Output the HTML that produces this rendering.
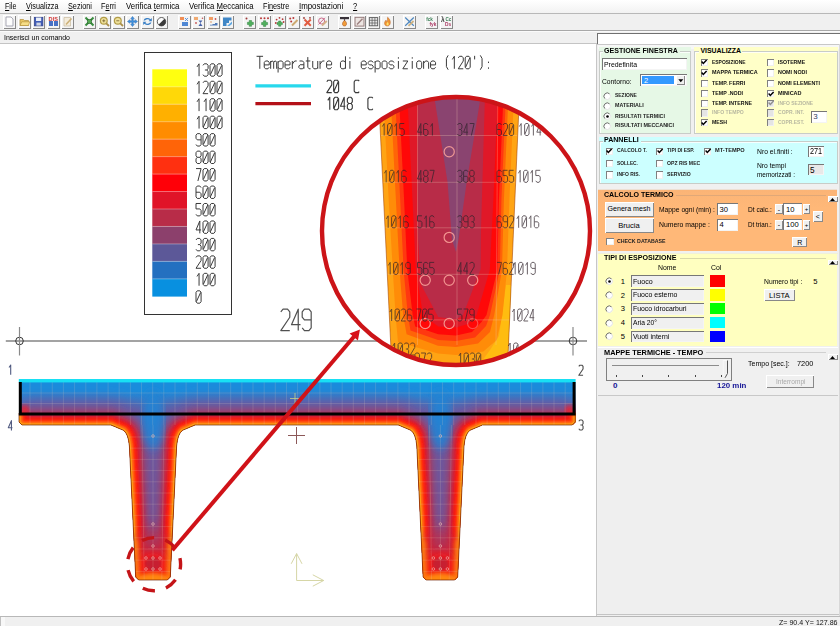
<!DOCTYPE html>
<html><head><meta charset="utf-8"><title>t</title>
<style>
html,body{margin:0;padding:0;}
body{width:840px;height:626px;overflow:hidden;background:#f0f0f0;position:relative;font-family:"Liberation Sans",sans-serif;font-size:8px;color:#000;}
.a{position:absolute;white-space:nowrap;}
.t{position:absolute;white-space:nowrap;line-height:1;}

</style></head><body>
<div class="a" style="left:0.00px;top:0.00px;width:840.00px;height:13.00px;background:linear-gradient(#ffffff,#f2f2f2);"></div>
<div class="a" style="left:0.00px;top:12.50px;width:840.00px;height:1.00px;background:#b8b8b8;"></div>
<div class="a" style="left:0.00px;top:13.50px;width:840.00px;height:17.00px;background:#f0f0f0;"></div>
<div class="a" style="left:0.00px;top:30.00px;width:840.00px;height:1.00px;background:#a8a8a8;"></div>
<div class="a" style="left:0.00px;top:31.00px;width:840.00px;height:1.00px;background:#fafafa;"></div>
<div class="a" style="left:0.00px;top:32.00px;width:840.00px;height:12.00px;background:#f0f0f0;"></div>
<div class="a" style="left:0.00px;top:43.00px;width:597.00px;height:1.00px;background:#c4c4c4;"></div>
<div class="t" style="left:4.70px;top:2.32px;font-size:8.6px;color:#000;transform:scaleX(0.8155);transform-origin:0 0;"><u>F</u>ile</div>
<div class="t" style="left:25.80px;top:2.32px;font-size:8.6px;color:#000;transform:scaleX(0.8428);transform-origin:0 0;"><u>V</u>isualizza</div>
<div class="t" style="left:67.80px;top:2.32px;font-size:8.6px;color:#000;transform:scaleX(0.8474);transform-origin:0 0;"><u>S</u>ezioni</div>
<div class="t" style="left:101.00px;top:2.32px;font-size:8.6px;color:#000;transform:scaleX(0.8488);transform-origin:0 0;">F<u>e</u>rri</div>
<div class="t" style="left:125.50px;top:2.32px;font-size:8.6px;color:#000;transform:scaleX(0.9101);transform-origin:0 0;">Verifica <u>t</u>ermica</div>
<div class="t" style="left:188.70px;top:2.32px;font-size:8.6px;color:#000;transform:scaleX(0.9010);transform-origin:0 0;">Verifica <u>M</u>eccanica</div>
<div class="t" style="left:262.80px;top:2.32px;font-size:8.6px;color:#000;transform:scaleX(0.8434);transform-origin:0 0;">Fi<u>n</u>estre</div>
<div class="t" style="left:298.80px;top:2.32px;font-size:8.6px;color:#000;transform:scaleX(0.9156);transform-origin:0 0;"><u>I</u>mpostazioni</div>
<div class="t" style="left:352.80px;top:2.32px;font-size:8.6px;color:#000;transform:scaleX(0.8782);transform-origin:0 0;"><u>?</u></div>
<div class="t" style="left:3.80px;top:33.83px;font-size:8.00px;color:#000;transform:scaleX(0.8731);transform-origin:0 0;">Inserisci un comando</div>
<div class="a" style="left:597.00px;top:33.00px;width:243.00px;height:11.00px;background:#fff;box-shadow:inset 1px 1px 0 #707070;"></div>
<div class="a" style="left:3.00px;top:15.00px;width:13.00px;height:14.00px;background:#f4f4f4;box-shadow:inset 1px 1px 0 #fff, inset -1px -1px 0 #888;"></div>
<svg class="a" style="left:3.00px;top:15.4px;opacity:0.88" width="13" height="13.4" viewBox="0 0 13 13.4"><path d="M3,2 H8 L10,4 V11 H3 Z" fill="#fff" stroke="#889" stroke-width="0.8"/></svg>
<div class="a" style="left:17.50px;top:15.00px;width:13.00px;height:14.00px;background:#f4f4f4;box-shadow:inset 1px 1px 0 #fff, inset -1px -1px 0 #888;"></div>
<svg class="a" style="left:17.50px;top:15.4px;opacity:0.88" width="13" height="13.4" viewBox="0 0 13 13.4"><path d="M2,4.5 H5.5 L6.5,5.5 H10.5 V10.5 H2 Z" fill="#e8c050" stroke="#a88020" stroke-width="0.7"/><path d="M2,10.5 L3.8,6.8 H11.8 L10.5,10.5 Z" fill="#f8dc78" stroke="#a88020" stroke-width="0.6"/></svg>
<div class="a" style="left:32.00px;top:15.00px;width:13.00px;height:14.00px;background:#f4f4f4;box-shadow:inset 1px 1px 0 #fff, inset -1px -1px 0 #888;"></div>
<svg class="a" style="left:32.00px;top:15.4px;opacity:0.88" width="13" height="13.4" viewBox="0 0 13 13.4"><rect x="2.3" y="2.3" width="8.6" height="8.6" fill="#2848b0" stroke="#182878" stroke-width="0.7"/><rect x="4" y="2.6" width="5.2" height="3.4" fill="#e8eef8"/><rect x="4.4" y="7.6" width="4.4" height="3" fill="#c8d0e0"/></svg>
<div class="a" style="left:46.70px;top:15.00px;width:13.00px;height:14.00px;background:#f4f4f4;box-shadow:inset 1px 1px 0 #fff, inset -1px -1px 0 #888;"></div>
<svg class="a" style="left:46.70px;top:15.4px;opacity:0.88" width="13" height="13.4" viewBox="0 0 13 13.4"><rect x="2" y="6" width="4" height="5" fill="#3060c0"/><rect x="7" y="6" width="4" height="5" fill="#3060c0"/><text x="1.6" y="6.2" font-size="5.6" font-weight="bold" fill="#d02020" font-family="Liberation Sans">DIS</text></svg>
<div class="a" style="left:60.80px;top:15.00px;width:13.00px;height:14.00px;background:#f4f4f4;box-shadow:inset 1px 1px 0 #fff, inset -1px -1px 0 #888;"></div>
<svg class="a" style="left:60.80px;top:15.4px;opacity:0.88" width="13" height="13.4" viewBox="0 0 13 13.4"><path d="M3,2.5 H9.5 V11 H3 Z" fill="#f4ecd8" stroke="#c0b090" stroke-width="0.7"/><path d="M5,9.5 L10.5,3.5" stroke="#c8a868" stroke-width="1.6"/></svg>
<div class="a" style="left:82.80px;top:15.00px;width:13.00px;height:14.00px;background:#f4f4f4;box-shadow:inset 1px 1px 0 #fff, inset -1px -1px 0 #888;"></div>
<svg class="a" style="left:82.80px;top:15.4px;opacity:0.88" width="13" height="13.4" viewBox="0 0 13 13.4"><path d="M2.5,2.5 L10.5,10.5 M10.5,2.5 L2.5,10.5" stroke="#208028" stroke-width="2"/><rect x="4.7" y="4.7" width="3.6" height="3.6" fill="#40a040" stroke="#105010" stroke-width="0.6"/></svg>
<div class="a" style="left:97.50px;top:15.00px;width:13.00px;height:14.00px;background:#f4f4f4;box-shadow:inset 1px 1px 0 #fff, inset -1px -1px 0 #888;"></div>
<svg class="a" style="left:97.50px;top:15.4px;opacity:0.88" width="13" height="13.4" viewBox="0 0 13 13.4"><circle cx="5.8" cy="5.8" r="3.4" fill="#f0e090" stroke="#a89030" stroke-width="1.2"/><path d="M8.3,8.3 L11,11" stroke="#a08030" stroke-width="1.8"/><path d="M4.3,5.8 H7.3 M5.8,4.3 V7.3" stroke="#604810" stroke-width="0.8"/></svg>
<div class="a" style="left:112.00px;top:15.00px;width:13.00px;height:14.00px;background:#f4f4f4;box-shadow:inset 1px 1px 0 #fff, inset -1px -1px 0 #888;"></div>
<svg class="a" style="left:112.00px;top:15.4px;opacity:0.88" width="13" height="13.4" viewBox="0 0 13 13.4"><circle cx="5.8" cy="5.8" r="3.4" fill="#f0e090" stroke="#a89030" stroke-width="1.2"/><path d="M8.3,8.3 L11,11" stroke="#a08030" stroke-width="1.8"/><path d="M4.3,5.8 H7.3" stroke="#604810" stroke-width="0.8"/></svg>
<div class="a" style="left:126.20px;top:15.00px;width:13.00px;height:14.00px;background:#f4f4f4;box-shadow:inset 1px 1px 0 #fff, inset -1px -1px 0 #888;"></div>
<svg class="a" style="left:126.20px;top:15.4px;opacity:0.88" width="13" height="13.4" viewBox="0 0 13 13.4"><path d="M6.5,1.5 L8.3,3.8 H7.2 V5.8 H9.2 V4.7 L11.5,6.5 L9.2,8.3 V7.2 H7.2 V9.2 H8.3 L6.5,11.5 L4.7,9.2 H5.8 V7.2 H3.8 V8.3 L1.5,6.5 L3.8,4.7 V5.8 H5.8 V3.8 H4.7 Z" fill="#2888e0" stroke="#1058a8" stroke-width="0.5"/></svg>
<div class="a" style="left:140.80px;top:15.00px;width:13.00px;height:14.00px;background:#f4f4f4;box-shadow:inset 1px 1px 0 #fff, inset -1px -1px 0 #888;"></div>
<svg class="a" style="left:140.80px;top:15.4px;opacity:0.88" width="13" height="13.4" viewBox="0 0 13 13.4"><path d="M2.5,5.5 A4,3.2 0 0 1 9.5,4.2 L10.8,3 V6.2 H7.6 L8.7,5.1 A2.8,2.2 0 0 0 4,5.6 Z" fill="#2070c0"/><path d="M10.5,7.5 A4,3.2 0 0 1 3.5,8.8 L2.2,10 V6.8 H5.4 L4.3,7.9 A2.8,2.2 0 0 0 9,7.4 Z" fill="#2070c0"/></svg>
<div class="a" style="left:155.30px;top:15.00px;width:13.00px;height:14.00px;background:#f4f4f4;box-shadow:inset 1px 1px 0 #fff, inset -1px -1px 0 #888;"></div>
<svg class="a" style="left:155.30px;top:15.4px;opacity:0.88" width="13" height="13.4" viewBox="0 0 13 13.4"><circle cx="6.5" cy="6.7" r="4.2" fill="#fff" stroke="#222" stroke-width="0.8"/><path d="M9.5,3.7 A4.2,4.2 0 0 1 3.5,9.7 Z" fill="#222"/></svg>
<div class="a" style="left:177.50px;top:15.00px;width:13.00px;height:14.00px;background:#f4f4f4;box-shadow:inset 1px 1px 0 #fff, inset -1px -1px 0 #888;"></div>
<svg class="a" style="left:177.50px;top:15.4px;opacity:0.88" width="13" height="13.4" viewBox="0 0 13 13.4"><rect x="2" y="2" width="4" height="3" fill="#f08040"/><path d="M4,7 H10 V11 H4 Z" fill="#3878d0"/><path d="M7,3 L10,6 M10,3 L7,6" stroke="#3878d0" stroke-width="0.9"/></svg>
<div class="a" style="left:192.00px;top:15.00px;width:13.00px;height:14.00px;background:#f4f4f4;box-shadow:inset 1px 1px 0 #fff, inset -1px -1px 0 #888;"></div>
<svg class="a" style="left:192.00px;top:15.4px;opacity:0.88" width="13" height="13.4" viewBox="0 0 13 13.4"><rect x="2" y="2" width="4" height="3" fill="#f0a060"/><path d="M6.5,5.5 H10.5 L8.5,8 L10.5,11 H6.5 L8.5,8 Z" fill="#3050a0"/><circle cx="4" cy="8" r="0.9" fill="#c04040"/><circle cx="10.5" cy="3.2" r="0.8" fill="#c04040"/></svg>
<div class="a" style="left:206.70px;top:15.00px;width:13.00px;height:14.00px;background:#f4f4f4;box-shadow:inset 1px 1px 0 #fff, inset -1px -1px 0 #888;"></div>
<svg class="a" style="left:206.70px;top:15.4px;opacity:0.88" width="13" height="13.4" viewBox="0 0 13 13.4"><rect x="2" y="2" width="4" height="3" fill="#f09050"/><path d="M3,10.5 H10.5 V8 H8 V9 H5.5 V9.7 H3 Z" fill="#3868b0"/><circle cx="8.5" cy="4" r="0.9" fill="#c04040"/><circle cx="4" cy="7" r="0.8" fill="#d08040"/></svg>
<div class="a" style="left:221.20px;top:15.00px;width:13.00px;height:14.00px;background:#f4f4f4;box-shadow:inset 1px 1px 0 #fff, inset -1px -1px 0 #888;"></div>
<svg class="a" style="left:221.20px;top:15.4px;opacity:0.88" width="13" height="13.4" viewBox="0 0 13 13.4"><path d="M2,2.5 H10.5 V5.5 H8 V8 H5.5 V11 H2 Z" fill="#2878c0"/><path d="M6,11 L11,6.5 V9 L8.5,11 Z" fill="#50a0e0"/></svg>
<div class="a" style="left:243.30px;top:15.00px;width:13.00px;height:14.00px;background:#f4f4f4;box-shadow:inset 1px 1px 0 #fff, inset -1px -1px 0 #888;"></div>
<svg class="a" style="left:243.30px;top:15.4px;opacity:0.88" width="13" height="13.4" viewBox="0 0 13 13.4"><path d="M6.2,5.5 H8.6 V7.3 H10.4 V9.5 H8.6 V11.3 H6.2 V9.5 H4.4 V7.3 H6.2 Z" fill="#38a848" stroke="#187028" stroke-width="0.5"/><circle cx="3.5" cy="3.6" r="1" fill="#902020"/></svg>
<div class="a" style="left:257.80px;top:15.00px;width:13.00px;height:14.00px;background:#f4f4f4;box-shadow:inset 1px 1px 0 #fff, inset -1px -1px 0 #888;"></div>
<svg class="a" style="left:257.80px;top:15.4px;opacity:0.88" width="13" height="13.4" viewBox="0 0 13 13.4"><path d="M5.4,5.8 H7.8 V7.5 H9.6 V9.7 H7.8 V11.4 H5.4 V9.7 H3.6 V7.5 H5.4 Z" fill="#38a848" stroke="#187028" stroke-width="0.5"/><circle cx="3" cy="3.2" r="1" fill="#b02020"/><circle cx="6.5" cy="3.2" r="1" fill="#b02020"/><circle cx="10" cy="3.2" r="1" fill="#b02020"/></svg>
<div class="a" style="left:272.50px;top:15.00px;width:13.00px;height:14.00px;background:#f4f4f4;box-shadow:inset 1px 1px 0 #fff, inset -1px -1px 0 #888;"></div>
<svg class="a" style="left:272.50px;top:15.4px;opacity:0.88" width="13" height="13.4" viewBox="0 0 13 13.4"><path d="M5.6,6 H7.8 V7.6 H9.4 V9.6 H7.8 V11.2 H5.6 V9.6 H4 V7.6 H5.6 Z" fill="#38a848" stroke="#187028" stroke-width="0.5"/><circle cx="2.8" cy="8" r="0.9" fill="#b02020"/><circle cx="3.6" cy="4.6" r="0.9" fill="#b02020"/><circle cx="6.5" cy="2.8" r="0.9" fill="#b02020"/><circle cx="9.6" cy="4.2" r="0.9" fill="#b02020"/><circle cx="10.6" cy="7" r="0.9" fill="#b02020"/></svg>
<div class="a" style="left:286.70px;top:15.00px;width:13.00px;height:14.00px;background:#f4f4f4;box-shadow:inset 1px 1px 0 #fff, inset -1px -1px 0 #888;"></div>
<svg class="a" style="left:286.70px;top:15.4px;opacity:0.88" width="13" height="13.4" viewBox="0 0 13 13.4"><circle cx="3.2" cy="3.4" r="1" fill="#b02020"/><circle cx="6.4" cy="3" r="1" fill="#b02020"/><circle cx="4.2" cy="6.4" r="1" fill="#b02020"/><path d="M5,10.5 L10.5,5" stroke="#c8a060" stroke-width="2"/></svg>
<div class="a" style="left:301.30px;top:15.00px;width:13.00px;height:14.00px;background:#f4f4f4;box-shadow:inset 1px 1px 0 #fff, inset -1px -1px 0 #888;"></div>
<svg class="a" style="left:301.30px;top:15.4px;opacity:0.88" width="13" height="13.4" viewBox="0 0 13 13.4"><path d="M3.5,4.5 L9.8,10.8 M9.8,4.5 L3.5,10.8" stroke="#e04828" stroke-width="2"/><circle cx="3" cy="3" r="0.9" fill="#902020"/><circle cx="9" cy="2.8" r="0.9" fill="#902020"/></svg>
<div class="a" style="left:315.80px;top:15.00px;width:13.00px;height:14.00px;background:#f4f4f4;box-shadow:inset 1px 1px 0 #fff, inset -1px -1px 0 #888;"></div>
<svg class="a" style="left:315.80px;top:15.4px;opacity:0.88" width="13" height="13.4" viewBox="0 0 13 13.4"><circle cx="5.6" cy="6" r="3" fill="none" stroke="#c04870" stroke-width="0.9"/><path d="M2.5,9.5 L9,2.8" stroke="#c04870" stroke-width="0.9"/><path d="M6,10.6 L10.8,6" stroke="#d0a878" stroke-width="1.8"/></svg>
<div class="a" style="left:338.00px;top:15.00px;width:13.00px;height:14.00px;background:#f4f4f4;box-shadow:inset 1px 1px 0 #fff, inset -1px -1px 0 #888;"></div>
<svg class="a" style="left:338.00px;top:15.4px;opacity:0.88" width="13" height="13.4" viewBox="0 0 13 13.4"><rect x="2" y="2" width="9" height="2.2" fill="#201820"/><path d="M6.5,4.2 V6" stroke="#201820" stroke-width="1.2"/><path d="M6.5,5.4 C9.5,7.4 9,11 6.5,11 C4,11 3.6,7.6 6.5,5.4 Z" fill="#f09020" stroke="#a04810" stroke-width="0.6"/></svg>
<div class="a" style="left:352.50px;top:15.00px;width:13.00px;height:14.00px;background:#f4f4f4;box-shadow:inset 1px 1px 0 #fff, inset -1px -1px 0 #888;"></div>
<svg class="a" style="left:352.50px;top:15.4px;opacity:0.88" width="13" height="13.4" viewBox="0 0 13 13.4"><rect x="2" y="2.3" width="9" height="8.8" fill="#ece4e0" stroke="#806060" stroke-width="0.9"/><path d="M4,9.5 L9.5,3.8" stroke="#907070" stroke-width="1.4"/></svg>
<div class="a" style="left:367.00px;top:15.00px;width:13.00px;height:14.00px;background:#f4f4f4;box-shadow:inset 1px 1px 0 #fff, inset -1px -1px 0 #888;"></div>
<svg class="a" style="left:367.00px;top:15.4px;opacity:0.88" width="13" height="13.4" viewBox="0 0 13 13.4"><rect x="2.3" y="2.6" width="8.4" height="8.2" fill="#e8e8e8" stroke="#444" stroke-width="0.9"/><path d="M5.1,2.6 V10.8 M7.9,2.6 V10.8 M2.3,5.3 H10.7 M2.3,8 H10.7" stroke="#444" stroke-width="0.7"/></svg>
<div class="a" style="left:381.30px;top:15.00px;width:13.00px;height:14.00px;background:#f4f4f4;box-shadow:inset 1px 1px 0 #fff, inset -1px -1px 0 #888;"></div>
<svg class="a" style="left:381.30px;top:15.4px;opacity:0.88" width="13" height="13.4" viewBox="0 0 13 13.4"><path d="M6.6,2.2 C10.5,5 10,11 6.5,11 C3,11 2.8,7 5,5.2 C5.2,6.4 5.8,6.8 6.2,6.4 C6.8,5.2 6.2,3.6 6.6,2.2 Z" fill="#f08818" stroke="#b05010" stroke-width="0.5"/><path d="M6.5,10.4 C8,10.4 8.2,8.4 6.6,7 C5.2,8.4 5.2,10.4 6.5,10.4 Z" fill="#ffe060"/></svg>
<div class="a" style="left:403.30px;top:15.00px;width:13.00px;height:14.00px;background:#f4f4f4;box-shadow:inset 1px 1px 0 #fff, inset -1px -1px 0 #888;"></div>
<svg class="a" style="left:403.30px;top:15.4px;opacity:0.88" width="13" height="13.4" viewBox="0 0 13 13.4"><path d="M2.2,2.5 L10.8,10.8 M10.8,2.5 L2.2,10.8" stroke="#3878b8" stroke-width="1.2"/><path d="M5.5,10.8 L10.5,6" stroke="#c8a870" stroke-width="1.8"/></svg>
<div class="a" style="left:425.30px;top:15.00px;width:13.00px;height:14.00px;background:#f4f4f4;box-shadow:inset 1px 1px 0 #fff, inset -1px -1px 0 #888;"></div>
<svg class="a" style="left:425.30px;top:15.4px;opacity:0.88" width="13" height="13.4" viewBox="0 0 13 13.4"><text x="1.2" y="5.8" font-size="4.6" font-weight="bold" fill="#207040" font-family="Liberation Sans">fck</text><text x="4.4" y="10.8" font-size="4.8" font-weight="bold" fill="#a02050" font-family="Liberation Sans">fyk</text></svg>
<div class="a" style="left:440.00px;top:15.00px;width:13.00px;height:14.00px;background:#f4f4f4;box-shadow:inset 1px 1px 0 #fff, inset -1px -1px 0 #888;"></div>
<svg class="a" style="left:440.00px;top:15.4px;opacity:0.88" width="13" height="13.4" viewBox="0 0 13 13.4"><text x="1" y="7.2" font-size="6.4" font-weight="bold" fill="#222" font-family="Liberation Sans">λ</text><text x="5.4" y="5.6" font-size="4.6" font-weight="bold" fill="#207040" font-family="Liberation Sans">Cc</text><text x="5" y="10.8" font-size="4.8" font-weight="bold" fill="#a02050" font-family="Liberation Sans">Ds</text></svg>
<svg class="a" style="left:0;top:44px" width="596" height="572" viewBox="0 44 596 572">
<rect x="0" y="44" width="597" height="573" fill="#fff"/>
<defs>
<clipPath id="secclip"><path d="M19,382 L575.6,382 L575.6,422 L572.6,425 L482.4,425 L469.9,430.3 Q465.0,434 464.0,446 L457.7,577.0 L454.7,580.0 L426.1,580.0 L423.1,577.0 L416.8,446 Q415.8,434 410.9,430.3 L398.4,425 L195.0,425 L182.5,430.3 Q177.6,434 176.6,446 L170.3,577.0 L167.3,580.0 L138.7,580.0 L135.7,577.0 L129.4,446 Q128.4,434 123.5,430.3 L111.0,425 L22,425 L19,422 Z"/></clipPath>
<filter id="b0" x="-5%" y="-20%" width="110%" height="140%"><feGaussianBlur stdDeviation="0.6"/></filter>
<filter id="b1" x="-5%" y="-20%" width="110%" height="140%"><feGaussianBlur stdDeviation="1.2"/></filter>
<filter id="b2" x="-5%" y="-20%" width="110%" height="140%"><feGaussianBlur stdDeviation="2.5"/></filter>
<filter id="b3" x="-5%" y="-20%" width="110%" height="140%"><feGaussianBlur stdDeviation="4"/></filter>
<filter id="b4" x="-5%" y="-20%" width="110%" height="140%"><feGaussianBlur stdDeviation="7"/></filter>
<linearGradient id="slabg" x1="0" y1="0" x2="0" y2="1"><stop offset="0" stop-color="#6a58a0" stop-opacity="0"/><stop offset="1" stop-color="#7a4c90" stop-opacity="0.85"/></linearGradient>
<clipPath id="bigclip"><circle cx="456" cy="231" r="134"/></clipPath>
</defs>
<rect x="144.5" y="52.5" width="87" height="262" fill="#fff" stroke="#333" stroke-width="1"/>
<rect x="152.3" y="69.30" width="34.7" height="17.76" fill="#ffff10"/>
<rect x="152.3" y="86.76" width="34.7" height="17.76" fill="#ffd808"/>
<rect x="152.3" y="86.26" width="34.7" height="1" fill="#fff" opacity="0.35"/>
<rect x="152.3" y="104.22" width="34.7" height="17.76" fill="#ffb000"/>
<rect x="152.3" y="103.72" width="34.7" height="1" fill="#fff" opacity="0.35"/>
<rect x="152.3" y="121.68" width="34.7" height="17.76" fill="#ff8c00"/>
<rect x="152.3" y="121.18" width="34.7" height="1" fill="#fff" opacity="0.35"/>
<rect x="152.3" y="139.15" width="34.7" height="17.76" fill="#ff6408"/>
<rect x="152.3" y="138.65" width="34.7" height="1" fill="#fff" opacity="0.35"/>
<rect x="152.3" y="156.61" width="34.7" height="17.76" fill="#ff3010"/>
<rect x="152.3" y="156.11" width="34.7" height="1" fill="#fff" opacity="0.35"/>
<rect x="152.3" y="174.07" width="34.7" height="17.76" fill="#ff0008"/>
<rect x="152.3" y="173.57" width="34.7" height="1" fill="#fff" opacity="0.35"/>
<rect x="152.3" y="191.53" width="34.7" height="17.76" fill="#e01428"/>
<rect x="152.3" y="191.03" width="34.7" height="1" fill="#fff" opacity="0.35"/>
<rect x="152.3" y="208.99" width="34.7" height="17.76" fill="#b82c48"/>
<rect x="152.3" y="208.49" width="34.7" height="1" fill="#fff" opacity="0.35"/>
<rect x="152.3" y="226.45" width="34.7" height="17.76" fill="#8c406c"/>
<rect x="152.3" y="225.95" width="34.7" height="1" fill="#fff" opacity="0.35"/>
<rect x="152.3" y="243.92" width="34.7" height="17.76" fill="#5c5898"/>
<rect x="152.3" y="243.42" width="34.7" height="1" fill="#fff" opacity="0.35"/>
<rect x="152.3" y="261.38" width="34.7" height="17.76" fill="#2470c0"/>
<rect x="152.3" y="260.88" width="34.7" height="1" fill="#fff" opacity="0.35"/>
<rect x="152.3" y="278.84" width="34.7" height="17.76" fill="#0890e0"/>
<rect x="152.3" y="278.34" width="34.7" height="1" fill="#fff" opacity="0.35"/>
<g fill="none" stroke="#3a3a3a" stroke-width="1.00" stroke-linejoin="round" ><path d="M0.8,2 L2.4,0 L2.4,8" vector-effect="non-scaling-stroke" transform="translate(196.00,63.80) scale(1.271,1.550)" /><path d="M0,1 L1,0 L3,0 L4,1 L4,3 L3,4 L1.5,4 M3,4 L4,5 L4,7 L3,8 L1,8 L0,7" vector-effect="non-scaling-stroke" transform="translate(203.00,63.80) scale(1.271,1.550)" /><path d="M1,0 L3,0 L4,1 L4,7 L3,8 L1,8 L0,7 L0,1 Z M0.3,7 L3.7,1" vector-effect="non-scaling-stroke" transform="translate(210.00,63.80) scale(1.271,1.550)" /><path d="M1,0 L3,0 L4,1 L4,7 L3,8 L1,8 L0,7 L0,1 Z M0.3,7 L3.7,1" vector-effect="non-scaling-stroke" transform="translate(217.00,63.80) scale(1.271,1.550)" /></g>
<g fill="none" stroke="#3a3a3a" stroke-width="1.00" stroke-linejoin="round" ><path d="M0.8,2 L2.4,0 L2.4,8" vector-effect="non-scaling-stroke" transform="translate(196.00,81.26) scale(1.271,1.550)" /><path d="M0,1 L1,0 L3,0 L4,1 L4,3 L0,8 L4,8" vector-effect="non-scaling-stroke" transform="translate(203.00,81.26) scale(1.271,1.550)" /><path d="M1,0 L3,0 L4,1 L4,7 L3,8 L1,8 L0,7 L0,1 Z M0.3,7 L3.7,1" vector-effect="non-scaling-stroke" transform="translate(210.00,81.26) scale(1.271,1.550)" /><path d="M1,0 L3,0 L4,1 L4,7 L3,8 L1,8 L0,7 L0,1 Z M0.3,7 L3.7,1" vector-effect="non-scaling-stroke" transform="translate(217.00,81.26) scale(1.271,1.550)" /></g>
<g fill="none" stroke="#3a3a3a" stroke-width="1.00" stroke-linejoin="round" ><path d="M0.8,2 L2.4,0 L2.4,8" vector-effect="non-scaling-stroke" transform="translate(196.00,98.72) scale(1.271,1.550)" /><path d="M0.8,2 L2.4,0 L2.4,8" vector-effect="non-scaling-stroke" transform="translate(203.00,98.72) scale(1.271,1.550)" /><path d="M1,0 L3,0 L4,1 L4,7 L3,8 L1,8 L0,7 L0,1 Z M0.3,7 L3.7,1" vector-effect="non-scaling-stroke" transform="translate(210.00,98.72) scale(1.271,1.550)" /><path d="M1,0 L3,0 L4,1 L4,7 L3,8 L1,8 L0,7 L0,1 Z M0.3,7 L3.7,1" vector-effect="non-scaling-stroke" transform="translate(217.00,98.72) scale(1.271,1.550)" /></g>
<g fill="none" stroke="#3a3a3a" stroke-width="1.00" stroke-linejoin="round" ><path d="M0.8,2 L2.4,0 L2.4,8" vector-effect="non-scaling-stroke" transform="translate(196.00,116.18) scale(1.271,1.550)" /><path d="M1,0 L3,0 L4,1 L4,7 L3,8 L1,8 L0,7 L0,1 Z M0.3,7 L3.7,1" vector-effect="non-scaling-stroke" transform="translate(203.00,116.18) scale(1.271,1.550)" /><path d="M1,0 L3,0 L4,1 L4,7 L3,8 L1,8 L0,7 L0,1 Z M0.3,7 L3.7,1" vector-effect="non-scaling-stroke" transform="translate(210.00,116.18) scale(1.271,1.550)" /><path d="M1,0 L3,0 L4,1 L4,7 L3,8 L1,8 L0,7 L0,1 Z M0.3,7 L3.7,1" vector-effect="non-scaling-stroke" transform="translate(217.00,116.18) scale(1.271,1.550)" /></g>
<g fill="none" stroke="#3a3a3a" stroke-width="1.00" stroke-linejoin="round" ><path d="M0,7 L1,8 L3,8 L4,7 L4,1 L3,0 L1,0 L0,1 L0,3 L1,4 L4,4" vector-effect="non-scaling-stroke" transform="translate(196.00,133.65) scale(1.271,1.550)" /><path d="M1,0 L3,0 L4,1 L4,7 L3,8 L1,8 L0,7 L0,1 Z M0.3,7 L3.7,1" vector-effect="non-scaling-stroke" transform="translate(203.00,133.65) scale(1.271,1.550)" /><path d="M1,0 L3,0 L4,1 L4,7 L3,8 L1,8 L0,7 L0,1 Z M0.3,7 L3.7,1" vector-effect="non-scaling-stroke" transform="translate(210.00,133.65) scale(1.271,1.550)" /></g>
<g fill="none" stroke="#3a3a3a" stroke-width="1.00" stroke-linejoin="round" ><path d="M1,0 L3,0 L4,1 L4,3 L3,4 L1,4 L0,3 L0,1 Z M1,4 L0,5 L0,7 L1,8 L3,8 L4,7 L4,5 L3,4" vector-effect="non-scaling-stroke" transform="translate(196.00,151.11) scale(1.271,1.550)" /><path d="M1,0 L3,0 L4,1 L4,7 L3,8 L1,8 L0,7 L0,1 Z M0.3,7 L3.7,1" vector-effect="non-scaling-stroke" transform="translate(203.00,151.11) scale(1.271,1.550)" /><path d="M1,0 L3,0 L4,1 L4,7 L3,8 L1,8 L0,7 L0,1 Z M0.3,7 L3.7,1" vector-effect="non-scaling-stroke" transform="translate(210.00,151.11) scale(1.271,1.550)" /></g>
<g fill="none" stroke="#3a3a3a" stroke-width="1.00" stroke-linejoin="round" ><path d="M0,0 L4,0 L1.5,8" vector-effect="non-scaling-stroke" transform="translate(196.00,168.57) scale(1.271,1.550)" /><path d="M1,0 L3,0 L4,1 L4,7 L3,8 L1,8 L0,7 L0,1 Z M0.3,7 L3.7,1" vector-effect="non-scaling-stroke" transform="translate(203.00,168.57) scale(1.271,1.550)" /><path d="M1,0 L3,0 L4,1 L4,7 L3,8 L1,8 L0,7 L0,1 Z M0.3,7 L3.7,1" vector-effect="non-scaling-stroke" transform="translate(210.00,168.57) scale(1.271,1.550)" /></g>
<g fill="none" stroke="#3a3a3a" stroke-width="1.00" stroke-linejoin="round" ><path d="M4,1 L3,0 L1,0 L0,1 L0,7 L1,8 L3,8 L4,7 L4,5 L3,4 L0,4" vector-effect="non-scaling-stroke" transform="translate(196.00,186.03) scale(1.271,1.550)" /><path d="M1,0 L3,0 L4,1 L4,7 L3,8 L1,8 L0,7 L0,1 Z M0.3,7 L3.7,1" vector-effect="non-scaling-stroke" transform="translate(203.00,186.03) scale(1.271,1.550)" /><path d="M1,0 L3,0 L4,1 L4,7 L3,8 L1,8 L0,7 L0,1 Z M0.3,7 L3.7,1" vector-effect="non-scaling-stroke" transform="translate(210.00,186.03) scale(1.271,1.550)" /></g>
<g fill="none" stroke="#3a3a3a" stroke-width="1.00" stroke-linejoin="round" ><path d="M4,0 L0,0 L0,3.5 L3,3.5 L4,4.5 L4,7 L3,8 L1,8 L0,7" vector-effect="non-scaling-stroke" transform="translate(196.00,203.49) scale(1.271,1.550)" /><path d="M1,0 L3,0 L4,1 L4,7 L3,8 L1,8 L0,7 L0,1 Z M0.3,7 L3.7,1" vector-effect="non-scaling-stroke" transform="translate(203.00,203.49) scale(1.271,1.550)" /><path d="M1,0 L3,0 L4,1 L4,7 L3,8 L1,8 L0,7 L0,1 Z M0.3,7 L3.7,1" vector-effect="non-scaling-stroke" transform="translate(210.00,203.49) scale(1.271,1.550)" /></g>
<g fill="none" stroke="#3a3a3a" stroke-width="1.00" stroke-linejoin="round" ><path d="M3,8 L3,0 L0,5.8 L4,5.8" vector-effect="non-scaling-stroke" transform="translate(196.00,220.95) scale(1.271,1.550)" /><path d="M1,0 L3,0 L4,1 L4,7 L3,8 L1,8 L0,7 L0,1 Z M0.3,7 L3.7,1" vector-effect="non-scaling-stroke" transform="translate(203.00,220.95) scale(1.271,1.550)" /><path d="M1,0 L3,0 L4,1 L4,7 L3,8 L1,8 L0,7 L0,1 Z M0.3,7 L3.7,1" vector-effect="non-scaling-stroke" transform="translate(210.00,220.95) scale(1.271,1.550)" /></g>
<g fill="none" stroke="#3a3a3a" stroke-width="1.00" stroke-linejoin="round" ><path d="M0,1 L1,0 L3,0 L4,1 L4,3 L3,4 L1.5,4 M3,4 L4,5 L4,7 L3,8 L1,8 L0,7" vector-effect="non-scaling-stroke" transform="translate(196.00,238.42) scale(1.271,1.550)" /><path d="M1,0 L3,0 L4,1 L4,7 L3,8 L1,8 L0,7 L0,1 Z M0.3,7 L3.7,1" vector-effect="non-scaling-stroke" transform="translate(203.00,238.42) scale(1.271,1.550)" /><path d="M1,0 L3,0 L4,1 L4,7 L3,8 L1,8 L0,7 L0,1 Z M0.3,7 L3.7,1" vector-effect="non-scaling-stroke" transform="translate(210.00,238.42) scale(1.271,1.550)" /></g>
<g fill="none" stroke="#3a3a3a" stroke-width="1.00" stroke-linejoin="round" ><path d="M0,1 L1,0 L3,0 L4,1 L4,3 L0,8 L4,8" vector-effect="non-scaling-stroke" transform="translate(196.00,255.88) scale(1.271,1.550)" /><path d="M1,0 L3,0 L4,1 L4,7 L3,8 L1,8 L0,7 L0,1 Z M0.3,7 L3.7,1" vector-effect="non-scaling-stroke" transform="translate(203.00,255.88) scale(1.271,1.550)" /><path d="M1,0 L3,0 L4,1 L4,7 L3,8 L1,8 L0,7 L0,1 Z M0.3,7 L3.7,1" vector-effect="non-scaling-stroke" transform="translate(210.00,255.88) scale(1.271,1.550)" /></g>
<g fill="none" stroke="#3a3a3a" stroke-width="1.00" stroke-linejoin="round" ><path d="M0.8,2 L2.4,0 L2.4,8" vector-effect="non-scaling-stroke" transform="translate(196.00,273.34) scale(1.271,1.550)" /><path d="M1,0 L3,0 L4,1 L4,7 L3,8 L1,8 L0,7 L0,1 Z M0.3,7 L3.7,1" vector-effect="non-scaling-stroke" transform="translate(203.00,273.34) scale(1.271,1.550)" /><path d="M1,0 L3,0 L4,1 L4,7 L3,8 L1,8 L0,7 L0,1 Z M0.3,7 L3.7,1" vector-effect="non-scaling-stroke" transform="translate(210.00,273.34) scale(1.271,1.550)" /></g>
<g fill="none" stroke="#3a3a3a" stroke-width="1.00" stroke-linejoin="round" ><path d="M1,0 L3,0 L4,1 L4,7 L3,8 L1,8 L0,7 L0,1 Z M0.3,7 L3.7,1" vector-effect="non-scaling-stroke" transform="translate(196.00,290.80) scale(1.271,1.550)" /></g>
<g fill="none" stroke="#3a3a3a" stroke-width="1.00" stroke-linejoin="round" ><path d="M-0.6,0 L4.6,0 M2,0 L2,8" vector-effect="non-scaling-stroke" transform="translate(257.30,56.30) scale(1.250,1.562)" /><path d="M0,5.5 L4,5.5 L4,4 L3,3 L1,3 L0,4 L0,7 L1,8 L3,8 L4,7" vector-effect="non-scaling-stroke" transform="translate(264.23,56.30) scale(1.250,1.562)" /><path d="M-0.4,8 L-0.4,3 M-0.4,4 L0.5,3 L1.2,3 L2,4 L2,8 M2,4 L2.9,3 L3.6,3 L4.4,4 L4.4,8" vector-effect="non-scaling-stroke" transform="translate(271.16,56.30) scale(1.250,1.562)" /><path d="M0,3 L0,10.4 M0,4 L1,3 L3,3 L4,4 L4,7 L3,8 L1,8 L0,7" vector-effect="non-scaling-stroke" transform="translate(278.09,56.30) scale(1.250,1.562)" /><path d="M0,5.5 L4,5.5 L4,4 L3,3 L1,3 L0,4 L0,7 L1,8 L3,8 L4,7" vector-effect="non-scaling-stroke" transform="translate(285.02,56.30) scale(1.250,1.562)" /><path d="M0.3,3 L0.3,8 M0.3,5 L2.2,3 L3.8,3" vector-effect="non-scaling-stroke" transform="translate(291.95,56.30) scale(1.250,1.562)" /><path d="M0.5,3 L3,3 L4,4 L4,8 M4,5.4 L1,5.4 L0,6.2 L0,7.2 L1,8 L3,8 L4,7" vector-effect="non-scaling-stroke" transform="translate(298.88,56.30) scale(1.250,1.562)" /><path d="M1.6,0.5 L1.6,7 L2.6,8 L3.8,8 M0,3 L3.6,3" vector-effect="non-scaling-stroke" transform="translate(305.81,56.30) scale(1.250,1.562)" /><path d="M0,3 L0,7 L1,8 L3,8 L4,7 M4,3 L4,8" vector-effect="non-scaling-stroke" transform="translate(312.74,56.30) scale(1.250,1.562)" /><path d="M0.3,3 L0.3,8 M0.3,5 L2.2,3 L3.8,3" vector-effect="non-scaling-stroke" transform="translate(319.67,56.30) scale(1.250,1.562)" /><path d="M0,5.5 L4,5.5 L4,4 L3,3 L1,3 L0,4 L0,7 L1,8 L3,8 L4,7" vector-effect="non-scaling-stroke" transform="translate(326.60,56.30) scale(1.250,1.562)" /><path d="M4,0 L4,8 M4,4 L3,3 L1,3 L0,4 L0,7 L1,8 L3,8 L4,7" vector-effect="non-scaling-stroke" transform="translate(340.46,56.30) scale(1.250,1.562)" /><path d="M2,3 L2,8 M2,0.6 L2,1.5" vector-effect="non-scaling-stroke" transform="translate(347.39,56.30) scale(1.250,1.562)" /><path d="M0,5.5 L4,5.5 L4,4 L3,3 L1,3 L0,4 L0,7 L1,8 L3,8 L4,7" vector-effect="non-scaling-stroke" transform="translate(361.25,56.30) scale(1.250,1.562)" /><path d="M4,4 L3,3 L1,3 L0,4 L0,4.7 L1,5.5 L3,5.5 L4,6.3 L4,7 L3,8 L1,8 L0,7" vector-effect="non-scaling-stroke" transform="translate(368.18,56.30) scale(1.250,1.562)" /><path d="M0,3 L0,10.4 M0,4 L1,3 L3,3 L4,4 L4,7 L3,8 L1,8 L0,7" vector-effect="non-scaling-stroke" transform="translate(375.11,56.30) scale(1.250,1.562)" /><path d="M1,3 L3,3 L4,4 L4,7 L3,8 L1,8 L0,7 L0,4 Z" vector-effect="non-scaling-stroke" transform="translate(382.04,56.30) scale(1.250,1.562)" /><path d="M4,4 L3,3 L1,3 L0,4 L0,4.7 L1,5.5 L3,5.5 L4,6.3 L4,7 L3,8 L1,8 L0,7" vector-effect="non-scaling-stroke" transform="translate(388.97,56.30) scale(1.250,1.562)" /><path d="M2,3 L2,8 M2,0.6 L2,1.5" vector-effect="non-scaling-stroke" transform="translate(395.90,56.30) scale(1.250,1.562)" /><path d="M0,3 L4,3 L0,8 L4,8" vector-effect="non-scaling-stroke" transform="translate(402.83,56.30) scale(1.250,1.562)" /><path d="M2,3 L2,8 M2,0.6 L2,1.5" vector-effect="non-scaling-stroke" transform="translate(409.76,56.30) scale(1.250,1.562)" /><path d="M1,3 L3,3 L4,4 L4,7 L3,8 L1,8 L0,7 L0,4 Z" vector-effect="non-scaling-stroke" transform="translate(416.69,56.30) scale(1.250,1.562)" /><path d="M0,3 L0,8 M0,4.5 L1.5,3 L3,3 L4,4 L4,8" vector-effect="non-scaling-stroke" transform="translate(423.62,56.30) scale(1.250,1.562)" /><path d="M0,5.5 L4,5.5 L4,4 L3,3 L1,3 L0,4 L0,7 L1,8 L3,8 L4,7" vector-effect="non-scaling-stroke" transform="translate(430.55,56.30) scale(1.250,1.562)" /><path d="M3,-0.6 L1.6,1.4 L1.6,6.6 L3,8.6" vector-effect="non-scaling-stroke" transform="translate(444.41,56.30) scale(1.250,1.562)" /><path d="M0.8,2 L2.4,0 L2.4,8" vector-effect="non-scaling-stroke" transform="translate(451.34,56.30) scale(1.250,1.562)" /><path d="M0,1 L1,0 L3,0 L4,1 L4,3 L0,8 L4,8" vector-effect="non-scaling-stroke" transform="translate(458.27,56.30) scale(1.250,1.562)" /><path d="M1,0 L3,0 L4,1 L4,7 L3,8 L1,8 L0,7 L0,1 Z M0.3,7 L3.7,1" vector-effect="non-scaling-stroke" transform="translate(465.20,56.30) scale(1.250,1.562)" /><path d="M2,-0.3 L2,2" vector-effect="non-scaling-stroke" transform="translate(472.13,56.30) scale(1.250,1.562)" /><path d="M1,-0.6 L2.4,1.4 L2.4,6.6 L1,8.6" vector-effect="non-scaling-stroke" transform="translate(479.06,56.30) scale(1.250,1.562)" /><path d="M2,3.4 L2,4.3 M2,7.1 L2,8" vector-effect="non-scaling-stroke" transform="translate(485.99,56.30) scale(1.250,1.562)" /></g>
<line x1="255.4" y1="85.8" x2="311" y2="85.8" stroke="#28d8ec" stroke-width="3.2"/>
<line x1="255.4" y1="103.7" x2="311" y2="103.7" stroke="#b41018" stroke-width="3.2"/>
<g fill="none" stroke="#383838" stroke-width="1.12" stroke-linejoin="round" ><path d="M0,1 L1,0 L3,0 L4,1 L4,3 L0,8 L4,8" vector-effect="non-scaling-stroke" transform="translate(326.80,80.20) scale(1.240,1.550)" /><path d="M1,0 L3,0 L4,1 L4,7 L3,8 L1,8 L0,7 L0,1 Z M0.3,7 L3.7,1" vector-effect="non-scaling-stroke" transform="translate(333.65,80.20) scale(1.240,1.550)" /><path d="M4,0.6 L3.4,0 L1,0 L0,1 L0,7 L1,8 L3.4,8 L4,7.4" vector-effect="non-scaling-stroke" transform="translate(354.20,80.20) scale(1.240,1.550)" /></g>
<g fill="none" stroke="#383838" stroke-width="1.12" stroke-linejoin="round" ><path d="M0.8,2 L2.4,0 L2.4,8" vector-effect="non-scaling-stroke" transform="translate(326.80,97.30) scale(1.240,1.550)" /><path d="M1,0 L3,0 L4,1 L4,7 L3,8 L1,8 L0,7 L0,1 Z M0.3,7 L3.7,1" vector-effect="non-scaling-stroke" transform="translate(333.65,97.30) scale(1.240,1.550)" /><path d="M3,8 L3,0 L0,5.8 L4,5.8" vector-effect="non-scaling-stroke" transform="translate(340.50,97.30) scale(1.240,1.550)" /><path d="M1,0 L3,0 L4,1 L4,3 L3,4 L1,4 L0,3 L0,1 Z M1,4 L0,5 L0,7 L1,8 L3,8 L4,7 L4,5 L3,4" vector-effect="non-scaling-stroke" transform="translate(347.35,97.30) scale(1.240,1.550)" /><path d="M4,0.6 L3.4,0 L1,0 L0,1 L0,7 L1,8 L3.4,8 L4,7.4" vector-effect="non-scaling-stroke" transform="translate(367.90,97.30) scale(1.240,1.550)" /></g>
<line x1="5.8" y1="341" x2="587" y2="341" stroke="#484848" stroke-width="1.1"/>
<circle cx="19.5" cy="341" r="3.8" fill="none" stroke="#333" stroke-width="1"/>
<line x1="19.5" y1="327" x2="19.5" y2="355.5" stroke="#8a8a8a" stroke-width="1.2"/>
<circle cx="573.0" cy="341" r="3.8" fill="none" stroke="#333" stroke-width="1"/>
<line x1="573.0" y1="327" x2="573.0" y2="355.5" stroke="#8a8a8a" stroke-width="1.2"/>
<g fill="none" stroke="#505050" stroke-width="1.20" stroke-linejoin="round" ><path d="M0,1 L1,0 L3,0 L4,1 L4,3 L0,8 L4,8" vector-effect="non-scaling-stroke" transform="translate(280.80,309.20) scale(2.247,2.675)" /><path d="M3,8 L3,0 L0,5.8 L4,5.8" vector-effect="non-scaling-stroke" transform="translate(291.50,309.20) scale(2.247,2.675)" /><path d="M0,7 L1,8 L3,8 L4,7 L4,1 L3,0 L1,0 L0,1 L0,3 L1,4 L4,4" vector-effect="non-scaling-stroke" transform="translate(302.20,309.20) scale(2.247,2.675)" /></g>
<g fill="none" stroke="#505a80" stroke-width="1.10" stroke-linejoin="round" ><path d="M0.8,2 L2.4,0 L2.4,8" vector-effect="non-scaling-stroke" transform="translate(8.20,365.00) scale(1.041,1.225)" /></g>
<g fill="none" stroke="#505a80" stroke-width="1.10" stroke-linejoin="round" ><path d="M3,8 L3,0 L0,5.8 L4,5.8" vector-effect="non-scaling-stroke" transform="translate(8.30,420.60) scale(1.041,1.225)" /></g>
<g fill="none" stroke="#4a4a4a" stroke-width="1.10" stroke-linejoin="round" ><path d="M0,1 L1,0 L3,0 L4,1 L4,3 L0,8 L4,8" vector-effect="non-scaling-stroke" transform="translate(578.80,365.20) scale(1.062,1.250)" /></g>
<g fill="none" stroke="#4a4a4a" stroke-width="1.10" stroke-linejoin="round" ><path d="M0,1 L1,0 L3,0 L4,1 L4,3 L3,4 L1.5,4 M3,4 L4,5 L4,7 L3,8 L1,8 L0,7" vector-effect="non-scaling-stroke" transform="translate(578.80,420.00) scale(1.062,1.250)" /></g>
<g clip-path="url(#secclip)">
<path d="M19,382 L575.6,382 L575.6,422 L572.6,425 L482.4,425 L469.9,430.3 Q465.0,434 464.0,446 L457.7,577.0 L454.7,580.0 L426.1,580.0 L423.1,577.0 L416.8,446 Q415.8,434 410.9,430.3 L398.4,425 L195.0,425 L182.5,430.3 Q177.6,434 176.6,446 L170.3,577.0 L167.3,580.0 L138.7,580.0 L135.7,577.0 L129.4,446 Q128.4,434 123.5,430.3 L111.0,425 L22,425 L19,422 Z" fill="#1a8cdc"/>
<rect x="19" y="391" width="558" height="24" fill="url(#slabg)"/>
<path d="M575.2,413 L575.2,422 L572.2,425 L482.4,425 L469.9,430.3 Q465.0,434 464.0,446 L457.7,577.0 L454.7,580.0 L426.1,580.0 L423.1,577.0 L416.8,446 Q415.8,434 410.9,430.3 L398.4,425 L195.0,425 L182.5,430.3 Q177.6,434 176.6,446 L170.3,577.0 L167.3,580.0 L138.7,580.0 L135.7,577.0 L129.4,446 Q128.4,434 123.5,430.3 L111.0,425 L22,425 L19,422 L19,413" fill="none" stroke="#6a58a0" stroke-width="50" filter="url(#b4)" stroke-linejoin="round"/>
<path d="M575.2,413 L575.2,422 L572.2,425 L482.4,425 L469.9,430.3 Q465.0,434 464.0,446 L457.7,577.0 L454.7,580.0 L426.1,580.0 L423.1,577.0 L416.8,446 Q415.8,434 410.9,430.3 L398.4,425 L195.0,425 L182.5,430.3 Q177.6,434 176.6,446 L170.3,577.0 L167.3,580.0 L138.7,580.0 L135.7,577.0 L129.4,446 Q128.4,434 123.5,430.3 L111.0,425 L22,425 L19,422 L19,413" fill="none" stroke="#a83a60" stroke-width="30" filter="url(#b3)" stroke-linejoin="round"/>
<path d="M575.2,413 L575.2,422 L572.2,425 L482.4,425 L469.9,430.3 Q465.0,434 464.0,446 L457.7,577.0 L454.7,580.0 L426.1,580.0 L423.1,577.0 L416.8,446 Q415.8,434 410.9,430.3 L398.4,425 L195.0,425 L182.5,430.3 Q177.6,434 176.6,446 L170.3,577.0 L167.3,580.0 L138.7,580.0 L135.7,577.0 L129.4,446 Q128.4,434 123.5,430.3 L111.0,425 L22,425 L19,422 L19,413" fill="none" stroke="#e81820" stroke-width="20" filter="url(#b2)" stroke-linejoin="round"/>
<path d="M575.2,413 L575.2,422 L572.2,425 L482.4,425 L469.9,430.3 Q465.0,434 464.0,446 L457.7,577.0 L454.7,580.0 L426.1,580.0 L423.1,577.0 L416.8,446 Q415.8,434 410.9,430.3 L398.4,425 L195.0,425 L182.5,430.3 Q177.6,434 176.6,446 L170.3,577.0 L167.3,580.0 L138.7,580.0 L135.7,577.0 L129.4,446 Q128.4,434 123.5,430.3 L111.0,425 L22,425 L19,422 L19,413" fill="none" stroke="#ff2008" stroke-width="13" filter="url(#b1)" stroke-linejoin="round"/>
<path d="M575.2,413 L575.2,422 L572.2,425 L482.4,425 L469.9,430.3 Q465.0,434 464.0,446 L457.7,577.0 L454.7,580.0 L426.1,580.0 L423.1,577.0 L416.8,446 Q415.8,434 410.9,430.3 L398.4,425 L195.0,425 L182.5,430.3 Q177.6,434 176.6,446 L170.3,577.0 L167.3,580.0 L138.7,580.0 L135.7,577.0 L129.4,446 Q128.4,434 123.5,430.3 L111.0,425 L22,425 L19,422 L19,413" fill="none" stroke="#ff7810" stroke-width="7" filter="url(#b1)" stroke-linejoin="round"/>
<path d="M575.2,413 L575.2,422 L572.2,425 L482.4,425 L469.9,430.3 Q465.0,434 464.0,446 L457.7,577.0 L454.7,580.0 L426.1,580.0 L423.1,577.0 L416.8,446 Q415.8,434 410.9,430.3 L398.4,425 L195.0,425 L182.5,430.3 Q177.6,434 176.6,446 L170.3,577.0 L167.3,580.0 L138.7,580.0 L135.7,577.0 L129.4,446 Q128.4,434 123.5,430.3 L111.0,425 L22,425 L19,422 L19,413" fill="none" stroke="#ffa018" stroke-width="3" filter="url(#b0)" stroke-linejoin="round"/>
<ellipse cx="153.0" cy="420" rx="11" ry="30" fill="#2484d4" opacity="0.9" filter="url(#b3)"/>
<ellipse cx="440.4" cy="420" rx="11" ry="30" fill="#2484d4" opacity="0.9" filter="url(#b3)"/>
<ellipse cx="24.5" cy="410" rx="5" ry="5" fill="#e82030" opacity="0.9" filter="url(#b2)"/>
<ellipse cx="569.8" cy="410" rx="5" ry="5" fill="#e82030" opacity="0.9" filter="url(#b2)"/>
<ellipse cx="153.0" cy="585" rx="26" ry="58" fill="#c82840" opacity="0.7" filter="url(#b4)"/>
<ellipse cx="153.0" cy="592" rx="24" ry="42" fill="#f81414" opacity="0.85" filter="url(#b3)"/>
<path d="M133.4,540 L135.7,581 H170.3 L172.6,540" fill="none" stroke="#ff7810" stroke-width="9" filter="url(#b2)"/>
<ellipse cx="153.0" cy="586" rx="19" ry="13" fill="#ff8810" opacity="1" filter="url(#b2)"/>
<ellipse cx="153.0" cy="564" rx="8" ry="6.5" fill="#c02034" opacity="0.85" filter="url(#b1)"/>
<ellipse cx="440.4" cy="585" rx="26" ry="58" fill="#c82840" opacity="0.7" filter="url(#b4)"/>
<ellipse cx="440.4" cy="592" rx="24" ry="42" fill="#f81414" opacity="0.85" filter="url(#b3)"/>
<path d="M420.8,540 L423.1,581 H457.7 L460.0,540" fill="none" stroke="#ff7810" stroke-width="9" filter="url(#b2)"/>
<ellipse cx="440.4" cy="586" rx="19" ry="13" fill="#ff8810" opacity="1" filter="url(#b2)"/>
<ellipse cx="440.4" cy="564" rx="8" ry="6.5" fill="#c02034" opacity="0.85" filter="url(#b1)"/>
<path d="M30.0,382 V425 M41.1,382 V425 M52.3,382 V425 M63.4,382 V425 M74.6,382 V425 M85.8,382 V425 M96.9,382 V425 M108.1,382 V425 M119.2,382 V425 M130.4,382 V425 M141.5,382 V425 M152.7,382 V425 M163.8,382 V425 M175.0,382 V425 M186.1,382 V425 M197.3,382 V425 M208.4,382 V425 M219.6,382 V425 M230.7,382 V425 M241.9,382 V425 M253.0,382 V425 M264.2,382 V425 M275.3,382 V425 M286.5,382 V425 M297.6,382 V425 M308.8,382 V425 M319.9,382 V425 M331.0,382 V425 M342.2,382 V425 M353.3,382 V425 M364.5,382 V425 M375.6,382 V425 M386.8,382 V425 M397.9,382 V425 M409.1,382 V425 M420.2,382 V425 M431.4,382 V425 M442.5,382 V425 M453.7,382 V425 M464.8,382 V425 M476.0,382 V425 M487.1,382 V425 M498.3,382 V425 M509.4,382 V425 M520.6,382 V425 M531.7,382 V425 M542.9,382 V425 M554.0,382 V425 M565.2,382 V425 M19,393.0 H576.5 M19,403.5 H576.5 M142.0,425 L144.2,580 M153.0,425 L153.0,580 M164.0,425 L161.8,580 M123.0,437.0 H183.0 M123.0,448.2 H183.0 M123.0,459.4 H183.0 M123.0,470.6 H183.0 M123.0,481.8 H183.0 M123.0,493.0 H183.0 M123.0,504.2 H183.0 M123.0,515.4 H183.0 M123.0,526.6 H183.0 M123.0,537.8 H183.0 M123.0,549.0 H183.0 M123.0,560.2 H183.0 M123.0,571.4 H183.0 M429.4,425 L431.6,580 M440.4,425 L440.4,580 M451.4,425 L449.2,580 M410.4,437.0 H470.4 M410.4,448.2 H470.4 M410.4,459.4 H470.4 M410.4,470.6 H470.4 M410.4,481.8 H470.4 M410.4,493.0 H470.4 M410.4,504.2 H470.4 M410.4,515.4 H470.4 M410.4,526.6 H470.4 M410.4,537.8 H470.4 M410.4,549.0 H470.4 M410.4,560.2 H470.4 M410.4,571.4 H470.4" stroke="#e8d0b8" stroke-width="0.8" opacity="0.22" fill="none"/>
</g>
<path d="M575.2,413 L575.2,422 L572.2,425 L482.4,425 L469.9,430.3 Q465.0,434 464.0,446 L457.7,577.0 L454.7,580.0 L426.1,580.0 L423.1,577.0 L416.8,446 Q415.8,434 410.9,430.3 L398.4,425 L195.0,425 L182.5,430.3 Q177.6,434 176.6,446 L170.3,577.0 L167.3,580.0 L138.7,580.0 L135.7,577.0 L129.4,446 Q128.4,434 123.5,430.3 L111.0,425 L22,425 L19,422 L19,413" fill="none" stroke="#702000" stroke-width="0.9" opacity="0.75"/>
<rect x="18.8" y="379" width="556.8" height="3.4" fill="#18e0f4"/>
<path d="M20.3,382 V414 H574.1 V382" fill="none" stroke="#000" stroke-width="3"/>
<circle cx="153.0" cy="436.0" r="1.3" fill="none" stroke="#e8b8b0" stroke-width="0.7" opacity="0.9"/>
<circle cx="153.0" cy="524.0" r="1.3" fill="none" stroke="#e8b8b0" stroke-width="0.7" opacity="0.9"/>
<circle cx="153.0" cy="546.0" r="1.3" fill="none" stroke="#e8b8b0" stroke-width="0.7" opacity="0.9"/>
<circle cx="146.0" cy="558.0" r="1.3" fill="none" stroke="#e8b8b0" stroke-width="0.7" opacity="0.9"/>
<circle cx="153.0" cy="558.0" r="1.3" fill="none" stroke="#e8b8b0" stroke-width="0.7" opacity="0.9"/>
<circle cx="160.0" cy="558.0" r="1.3" fill="none" stroke="#e8b8b0" stroke-width="0.7" opacity="0.9"/>
<circle cx="146.0" cy="569.0" r="1.3" fill="none" stroke="#e8b8b0" stroke-width="0.7" opacity="0.9"/>
<circle cx="153.0" cy="569.0" r="1.3" fill="none" stroke="#e8b8b0" stroke-width="0.7" opacity="0.9"/>
<circle cx="160.0" cy="569.0" r="1.3" fill="none" stroke="#e8b8b0" stroke-width="0.7" opacity="0.9"/>
<circle cx="440.4" cy="436.0" r="1.3" fill="none" stroke="#e8b8b0" stroke-width="0.7" opacity="0.9"/>
<circle cx="440.4" cy="524.0" r="1.3" fill="none" stroke="#e8b8b0" stroke-width="0.7" opacity="0.9"/>
<circle cx="440.4" cy="546.0" r="1.3" fill="none" stroke="#e8b8b0" stroke-width="0.7" opacity="0.9"/>
<circle cx="433.4" cy="558.0" r="1.3" fill="none" stroke="#e8b8b0" stroke-width="0.7" opacity="0.9"/>
<circle cx="440.4" cy="558.0" r="1.3" fill="none" stroke="#e8b8b0" stroke-width="0.7" opacity="0.9"/>
<circle cx="447.4" cy="558.0" r="1.3" fill="none" stroke="#e8b8b0" stroke-width="0.7" opacity="0.9"/>
<circle cx="433.4" cy="569.0" r="1.3" fill="none" stroke="#e8b8b0" stroke-width="0.7" opacity="0.9"/>
<circle cx="440.4" cy="569.0" r="1.3" fill="none" stroke="#e8b8b0" stroke-width="0.7" opacity="0.9"/>
<circle cx="447.4" cy="569.0" r="1.3" fill="none" stroke="#e8b8b0" stroke-width="0.7" opacity="0.9"/>
<path d="M288,435.5 H305 M296.5,427 V444" stroke="#8c5858" stroke-width="1" fill="none"/>
<path d="M290,398.5 H300 M295,393 V404" stroke="#c8d088" stroke-width="1" fill="none" opacity="0.8"/>
<path d="M296.6,580.5 V553.6 M291.2,563.8 L296.6,553.6 L302,563.8 M296.6,580.5 H323.7 M312.8,574.8 L323.7,580.5 L312.8,586.2" stroke="#d6d6a6" stroke-width="1" fill="none"/>
<circle cx="154" cy="564.2" r="26.6" fill="none" stroke="#c41418" stroke-width="3.4" stroke-dasharray="12.5 11.376" stroke-dashoffset="7.2"/>
<line x1="172.3" y1="550.3" x2="354.5" y2="336" stroke="#d01218" stroke-width="4"/>
<path d="M360,329.4 L349.6,333.6 L357.9,340.4 Z" fill="#d81018"/>
<g clip-path="url(#bigclip)">
<rect x="320" y="95" width="275" height="275" fill="#fff"/>
<polygon points="378.5,95.0 519.5,95.0 507.3,372.0 392.1,372.0" fill="#ffa414" />
<polygon points="506.0,285.0 511.1,285.0 507.3,372.0 474.0,372.0 490.0,350.0 499.0,336.0" fill="#ffbc10" />
<polygon points="383.3,95.0 388.7,200.0 392.8,270.0 395.5,315.0 398.0,342.0 438.0,353.4 456.0,355.0 483.3,351.5 496.7,340.0 502.5,315.0 507.0,270.0 509.4,200.0 514.0,95.0" fill="#ff8c08" />
<polygon points="390.5,95.0 395.9,200.0 399.6,270.0 403.1,315.0 406.6,334.3 438.0,345.8 456.0,347.0 478.0,343.5 490.0,332.0 494.2,315.0 502.0,270.0 503.9,200.0 508.5,95.0" fill="#ff6408" />
<polygon points="395.0,95.0 400.2,200.0 403.6,270.0 407.8,315.0 410.5,330.5 438.0,340.0 456.0,341.0 475.0,337.5 486.0,326.0 490.0,315.0 499.8,270.0 501.4,200.0 506.0,95.0" fill="#ff3810" />
<polygon points="398.9,95.0 404.1,200.0 407.3,270.0 412.7,315.0 415.2,326.6 438.2,334.3 456.0,335.5 472.0,332.0 481.5,322.0 486.5,315.0 497.3,270.0 498.9,200.0 503.5,95.0" fill="#ff0808" />
<polygon points="407.3,95.0 412.5,200.0 415.8,270.0 423.0,315.0 438.2,326.6 456.0,327.5 468.0,324.0 476.6,315.0 489.8,270.0 493.4,200.0 498.0,95.0" fill="#e01828" />
<polygon points="417.5,95.0 485.0,95.0 481.0,230.0 480.7,269.0 463.0,315.0 456.0,319.5 438.2,317.0 421.0,284.5 417.5,230.0" fill="#b82c48" />
<polygon points="434.0,95.0 481.0,95.0 466.7,182.0 458.5,240.0 456.0,252.0 452.0,240.0 447.5,182.0" fill="#8a4470" />
<path d="M380.5,135.5 H517.7 M382.8,182.3 H515.7 M385.0,227.8 H513.7 M387.3,274.3 H511.6 M389.5,319.9 H509.6 M417.5,95 L417.5,345 M457.0,95 L457.0,345 M497.8,95 L496.0,345" stroke="#f0c8b0" stroke-width="0.9" opacity="0.33" fill="none"/>
<path d="M378.5,95 L392.1,372 M519.5,95 L507.3,372" stroke="#a04000" stroke-width="0.8" opacity="0.7" fill="none"/>
<circle cx="449.2" cy="151.8" r="5.1" fill="none" stroke="#f8a098" stroke-width="1.2" opacity="0.90"/>
<circle cx="449.2" cy="237.4" r="5.1" fill="none" stroke="#f8a098" stroke-width="1.2" opacity="0.90"/>
<circle cx="425.2" cy="280.3" r="5.1" fill="none" stroke="#f8a098" stroke-width="1.2" opacity="0.90"/>
<circle cx="449.2" cy="280.3" r="5.1" fill="none" stroke="#f8a098" stroke-width="1.2" opacity="0.90"/>
<circle cx="472.7" cy="280.3" r="5.1" fill="none" stroke="#f8a098" stroke-width="1.2" opacity="0.90"/>
<circle cx="425.2" cy="323.5" r="5.1" fill="none" stroke="#f8a098" stroke-width="1.2" opacity="0.90"/>
<circle cx="449.2" cy="323.5" r="5.1" fill="none" stroke="#f8a098" stroke-width="1.2" opacity="0.90"/>
<circle cx="472.7" cy="323.5" r="5.1" fill="none" stroke="#f8a098" stroke-width="1.2" opacity="0.45"/>
<g fill="none" stroke="#30242c" stroke-width="1.00" stroke-linejoin="round" opacity="0.72"><path d="M0.8,2 L2.4,0 L2.4,8" vector-effect="non-scaling-stroke" transform="translate(381.50,123.50) scale(1.110,1.500)" /><path d="M1,0 L3,0 L4,1 L4,7 L3,8 L1,8 L0,7 L0,1 Z M0.3,7 L3.7,1" vector-effect="non-scaling-stroke" transform="translate(387.60,123.50) scale(1.110,1.500)" /><path d="M0.8,2 L2.4,0 L2.4,8" vector-effect="non-scaling-stroke" transform="translate(393.70,123.50) scale(1.110,1.500)" /><path d="M4,0 L0,0 L0,3.5 L3,3.5 L4,4.5 L4,7 L3,8 L1,8 L0,7" vector-effect="non-scaling-stroke" transform="translate(399.80,123.50) scale(1.110,1.500)" /></g>
<g fill="none" stroke="#30242c" stroke-width="1.00" stroke-linejoin="round" opacity="0.72"><path d="M3,8 L3,0 L0,5.8 L4,5.8" vector-effect="non-scaling-stroke" transform="translate(417.50,123.50) scale(1.110,1.500)" /><path d="M4,1 L3,0 L1,0 L0,1 L0,7 L1,8 L3,8 L4,7 L4,5 L3,4 L0,4" vector-effect="non-scaling-stroke" transform="translate(423.60,123.50) scale(1.110,1.500)" /><path d="M0.8,2 L2.4,0 L2.4,8" vector-effect="non-scaling-stroke" transform="translate(429.70,123.50) scale(1.110,1.500)" /></g>
<g fill="none" stroke="#30242c" stroke-width="1.00" stroke-linejoin="round" opacity="0.72"><path d="M0,1 L1,0 L3,0 L4,1 L4,3 L3,4 L1.5,4 M3,4 L4,5 L4,7 L3,8 L1,8 L0,7" vector-effect="non-scaling-stroke" transform="translate(457.50,123.50) scale(1.110,1.500)" /><path d="M3,8 L3,0 L0,5.8 L4,5.8" vector-effect="non-scaling-stroke" transform="translate(463.60,123.50) scale(1.110,1.500)" /><path d="M0,0 L4,0 L1.5,8" vector-effect="non-scaling-stroke" transform="translate(469.70,123.50) scale(1.110,1.500)" /></g>
<g fill="none" stroke="#30242c" stroke-width="1.00" stroke-linejoin="round" opacity="0.72"><path d="M4,1 L3,0 L1,0 L0,1 L0,7 L1,8 L3,8 L4,7 L4,5 L3,4 L0,4" vector-effect="non-scaling-stroke" transform="translate(497.00,123.50) scale(1.110,1.500)" /><path d="M0,1 L1,0 L3,0 L4,1 L4,3 L0,8 L4,8" vector-effect="non-scaling-stroke" transform="translate(503.10,123.50) scale(1.110,1.500)" /><path d="M1,0 L3,0 L4,1 L4,7 L3,8 L1,8 L0,7 L0,1 Z M0.3,7 L3.7,1" vector-effect="non-scaling-stroke" transform="translate(509.20,123.50) scale(1.110,1.500)" /></g>
<g fill="none" stroke="#30242c" stroke-width="1.00" stroke-linejoin="round" opacity="0.72"><path d="M0.8,2 L2.4,0 L2.4,8" vector-effect="non-scaling-stroke" transform="translate(518.50,123.50) scale(1.110,1.500)" /><path d="M1,0 L3,0 L4,1 L4,7 L3,8 L1,8 L0,7 L0,1 Z M0.3,7 L3.7,1" vector-effect="non-scaling-stroke" transform="translate(524.60,123.50) scale(1.110,1.500)" /><path d="M0.8,2 L2.4,0 L2.4,8" vector-effect="non-scaling-stroke" transform="translate(530.70,123.50) scale(1.110,1.500)" /><path d="M3,8 L3,0 L0,5.8 L4,5.8" vector-effect="non-scaling-stroke" transform="translate(536.80,123.50) scale(1.110,1.500)" /></g>
<g fill="none" stroke="#30242c" stroke-width="1.00" stroke-linejoin="round" opacity="0.72"><path d="M0.8,2 L2.4,0 L2.4,8" vector-effect="non-scaling-stroke" transform="translate(383.50,170.30) scale(1.110,1.500)" /><path d="M1,0 L3,0 L4,1 L4,7 L3,8 L1,8 L0,7 L0,1 Z M0.3,7 L3.7,1" vector-effect="non-scaling-stroke" transform="translate(389.60,170.30) scale(1.110,1.500)" /><path d="M0.8,2 L2.4,0 L2.4,8" vector-effect="non-scaling-stroke" transform="translate(395.70,170.30) scale(1.110,1.500)" /><path d="M4,1 L3,0 L1,0 L0,1 L0,7 L1,8 L3,8 L4,7 L4,5 L3,4 L0,4" vector-effect="non-scaling-stroke" transform="translate(401.80,170.30) scale(1.110,1.500)" /></g>
<g fill="none" stroke="#30242c" stroke-width="1.00" stroke-linejoin="round" opacity="0.72"><path d="M3,8 L3,0 L0,5.8 L4,5.8" vector-effect="non-scaling-stroke" transform="translate(417.50,170.30) scale(1.110,1.500)" /><path d="M1,0 L3,0 L4,1 L4,3 L3,4 L1,4 L0,3 L0,1 Z M1,4 L0,5 L0,7 L1,8 L3,8 L4,7 L4,5 L3,4" vector-effect="non-scaling-stroke" transform="translate(423.60,170.30) scale(1.110,1.500)" /><path d="M0,0 L4,0 L1.5,8" vector-effect="non-scaling-stroke" transform="translate(429.70,170.30) scale(1.110,1.500)" /></g>
<g fill="none" stroke="#30242c" stroke-width="1.00" stroke-linejoin="round" opacity="0.72"><path d="M0,1 L1,0 L3,0 L4,1 L4,3 L3,4 L1.5,4 M3,4 L4,5 L4,7 L3,8 L1,8 L0,7" vector-effect="non-scaling-stroke" transform="translate(457.50,170.30) scale(1.110,1.500)" /><path d="M4,1 L3,0 L1,0 L0,1 L0,7 L1,8 L3,8 L4,7 L4,5 L3,4 L0,4" vector-effect="non-scaling-stroke" transform="translate(463.60,170.30) scale(1.110,1.500)" /><path d="M1,0 L3,0 L4,1 L4,3 L3,4 L1,4 L0,3 L0,1 Z M1,4 L0,5 L0,7 L1,8 L3,8 L4,7 L4,5 L3,4" vector-effect="non-scaling-stroke" transform="translate(469.70,170.30) scale(1.110,1.500)" /></g>
<g fill="none" stroke="#30242c" stroke-width="1.00" stroke-linejoin="round" opacity="0.72"><path d="M4,1 L3,0 L1,0 L0,1 L0,7 L1,8 L3,8 L4,7 L4,5 L3,4 L0,4" vector-effect="non-scaling-stroke" transform="translate(497.00,170.30) scale(1.110,1.500)" /><path d="M4,0 L0,0 L0,3.5 L3,3.5 L4,4.5 L4,7 L3,8 L1,8 L0,7" vector-effect="non-scaling-stroke" transform="translate(503.10,170.30) scale(1.110,1.500)" /><path d="M4,0 L0,0 L0,3.5 L3,3.5 L4,4.5 L4,7 L3,8 L1,8 L0,7" vector-effect="non-scaling-stroke" transform="translate(509.20,170.30) scale(1.110,1.500)" /></g>
<g fill="none" stroke="#30242c" stroke-width="1.00" stroke-linejoin="round" opacity="0.72"><path d="M0.8,2 L2.4,0 L2.4,8" vector-effect="non-scaling-stroke" transform="translate(517.50,170.30) scale(1.110,1.500)" /><path d="M1,0 L3,0 L4,1 L4,7 L3,8 L1,8 L0,7 L0,1 Z M0.3,7 L3.7,1" vector-effect="non-scaling-stroke" transform="translate(523.60,170.30) scale(1.110,1.500)" /><path d="M0.8,2 L2.4,0 L2.4,8" vector-effect="non-scaling-stroke" transform="translate(529.70,170.30) scale(1.110,1.500)" /><path d="M4,0 L0,0 L0,3.5 L3,3.5 L4,4.5 L4,7 L3,8 L1,8 L0,7" vector-effect="non-scaling-stroke" transform="translate(535.80,170.30) scale(1.110,1.500)" /></g>
<g fill="none" stroke="#30242c" stroke-width="1.00" stroke-linejoin="round" opacity="0.72"><path d="M0.8,2 L2.4,0 L2.4,8" vector-effect="non-scaling-stroke" transform="translate(385.50,215.80) scale(1.110,1.500)" /><path d="M1,0 L3,0 L4,1 L4,7 L3,8 L1,8 L0,7 L0,1 Z M0.3,7 L3.7,1" vector-effect="non-scaling-stroke" transform="translate(391.60,215.80) scale(1.110,1.500)" /><path d="M0.8,2 L2.4,0 L2.4,8" vector-effect="non-scaling-stroke" transform="translate(397.70,215.80) scale(1.110,1.500)" /><path d="M4,1 L3,0 L1,0 L0,1 L0,7 L1,8 L3,8 L4,7 L4,5 L3,4 L0,4" vector-effect="non-scaling-stroke" transform="translate(403.80,215.80) scale(1.110,1.500)" /></g>
<g fill="none" stroke="#30242c" stroke-width="1.00" stroke-linejoin="round" opacity="0.72"><path d="M4,0 L0,0 L0,3.5 L3,3.5 L4,4.5 L4,7 L3,8 L1,8 L0,7" vector-effect="non-scaling-stroke" transform="translate(417.50,215.80) scale(1.110,1.500)" /><path d="M0.8,2 L2.4,0 L2.4,8" vector-effect="non-scaling-stroke" transform="translate(423.60,215.80) scale(1.110,1.500)" /><path d="M4,1 L3,0 L1,0 L0,1 L0,7 L1,8 L3,8 L4,7 L4,5 L3,4 L0,4" vector-effect="non-scaling-stroke" transform="translate(429.70,215.80) scale(1.110,1.500)" /></g>
<g fill="none" stroke="#30242c" stroke-width="1.00" stroke-linejoin="round" opacity="0.72"><path d="M0,1 L1,0 L3,0 L4,1 L4,3 L3,4 L1.5,4 M3,4 L4,5 L4,7 L3,8 L1,8 L0,7" vector-effect="non-scaling-stroke" transform="translate(457.50,215.80) scale(1.110,1.500)" /><path d="M0,7 L1,8 L3,8 L4,7 L4,1 L3,0 L1,0 L0,1 L0,3 L1,4 L4,4" vector-effect="non-scaling-stroke" transform="translate(463.60,215.80) scale(1.110,1.500)" /><path d="M0,1 L1,0 L3,0 L4,1 L4,3 L3,4 L1.5,4 M3,4 L4,5 L4,7 L3,8 L1,8 L0,7" vector-effect="non-scaling-stroke" transform="translate(469.70,215.80) scale(1.110,1.500)" /></g>
<g fill="none" stroke="#30242c" stroke-width="1.00" stroke-linejoin="round" opacity="0.72"><path d="M4,1 L3,0 L1,0 L0,1 L0,7 L1,8 L3,8 L4,7 L4,5 L3,4 L0,4" vector-effect="non-scaling-stroke" transform="translate(497.00,215.80) scale(1.110,1.500)" /><path d="M0,7 L1,8 L3,8 L4,7 L4,1 L3,0 L1,0 L0,1 L0,3 L1,4 L4,4" vector-effect="non-scaling-stroke" transform="translate(503.10,215.80) scale(1.110,1.500)" /><path d="M0,1 L1,0 L3,0 L4,1 L4,3 L0,8 L4,8" vector-effect="non-scaling-stroke" transform="translate(509.20,215.80) scale(1.110,1.500)" /></g>
<g fill="none" stroke="#30242c" stroke-width="1.00" stroke-linejoin="round" opacity="0.72"><path d="M0.8,2 L2.4,0 L2.4,8" vector-effect="non-scaling-stroke" transform="translate(516.00,215.80) scale(1.110,1.500)" /><path d="M1,0 L3,0 L4,1 L4,7 L3,8 L1,8 L0,7 L0,1 Z M0.3,7 L3.7,1" vector-effect="non-scaling-stroke" transform="translate(522.10,215.80) scale(1.110,1.500)" /><path d="M0.8,2 L2.4,0 L2.4,8" vector-effect="non-scaling-stroke" transform="translate(528.20,215.80) scale(1.110,1.500)" /><path d="M4,1 L3,0 L1,0 L0,1 L0,7 L1,8 L3,8 L4,7 L4,5 L3,4 L0,4" vector-effect="non-scaling-stroke" transform="translate(534.30,215.80) scale(1.110,1.500)" /></g>
<g fill="none" stroke="#30242c" stroke-width="1.00" stroke-linejoin="round" opacity="0.72"><path d="M0.8,2 L2.4,0 L2.4,8" vector-effect="non-scaling-stroke" transform="translate(387.50,262.40) scale(1.110,1.500)" /><path d="M1,0 L3,0 L4,1 L4,7 L3,8 L1,8 L0,7 L0,1 Z M0.3,7 L3.7,1" vector-effect="non-scaling-stroke" transform="translate(393.60,262.40) scale(1.110,1.500)" /><path d="M0.8,2 L2.4,0 L2.4,8" vector-effect="non-scaling-stroke" transform="translate(399.70,262.40) scale(1.110,1.500)" /><path d="M0,7 L1,8 L3,8 L4,7 L4,1 L3,0 L1,0 L0,1 L0,3 L1,4 L4,4" vector-effect="non-scaling-stroke" transform="translate(405.80,262.40) scale(1.110,1.500)" /></g>
<g fill="none" stroke="#30242c" stroke-width="1.00" stroke-linejoin="round" opacity="0.72"><path d="M4,0 L0,0 L0,3.5 L3,3.5 L4,4.5 L4,7 L3,8 L1,8 L0,7" vector-effect="non-scaling-stroke" transform="translate(417.50,262.40) scale(1.110,1.500)" /><path d="M4,1 L3,0 L1,0 L0,1 L0,7 L1,8 L3,8 L4,7 L4,5 L3,4 L0,4" vector-effect="non-scaling-stroke" transform="translate(423.60,262.40) scale(1.110,1.500)" /><path d="M4,0 L0,0 L0,3.5 L3,3.5 L4,4.5 L4,7 L3,8 L1,8 L0,7" vector-effect="non-scaling-stroke" transform="translate(429.70,262.40) scale(1.110,1.500)" /></g>
<g fill="none" stroke="#30242c" stroke-width="1.00" stroke-linejoin="round" opacity="0.72"><path d="M3,8 L3,0 L0,5.8 L4,5.8" vector-effect="non-scaling-stroke" transform="translate(457.50,262.40) scale(1.110,1.500)" /><path d="M3,8 L3,0 L0,5.8 L4,5.8" vector-effect="non-scaling-stroke" transform="translate(463.60,262.40) scale(1.110,1.500)" /><path d="M0,1 L1,0 L3,0 L4,1 L4,3 L0,8 L4,8" vector-effect="non-scaling-stroke" transform="translate(469.70,262.40) scale(1.110,1.500)" /></g>
<g fill="none" stroke="#30242c" stroke-width="1.00" stroke-linejoin="round" opacity="0.72"><path d="M0,0 L4,0 L1.5,8" vector-effect="non-scaling-stroke" transform="translate(497.00,262.40) scale(1.110,1.500)" /><path d="M4,1 L3,0 L1,0 L0,1 L0,7 L1,8 L3,8 L4,7 L4,5 L3,4 L0,4" vector-effect="non-scaling-stroke" transform="translate(503.10,262.40) scale(1.110,1.500)" /><path d="M0,1 L1,0 L3,0 L4,1 L4,3 L0,8 L4,8" vector-effect="non-scaling-stroke" transform="translate(509.20,262.40) scale(1.110,1.500)" /></g>
<g fill="none" stroke="#30242c" stroke-width="1.00" stroke-linejoin="round" opacity="0.72"><path d="M0.8,2 L2.4,0 L2.4,8" vector-effect="non-scaling-stroke" transform="translate(512.50,262.40) scale(1.110,1.500)" /><path d="M1,0 L3,0 L4,1 L4,7 L3,8 L1,8 L0,7 L0,1 Z M0.3,7 L3.7,1" vector-effect="non-scaling-stroke" transform="translate(518.60,262.40) scale(1.110,1.500)" /><path d="M0.8,2 L2.4,0 L2.4,8" vector-effect="non-scaling-stroke" transform="translate(524.70,262.40) scale(1.110,1.500)" /><path d="M0,7 L1,8 L3,8 L4,7 L4,1 L3,0 L1,0 L0,1 L0,3 L1,4 L4,4" vector-effect="non-scaling-stroke" transform="translate(530.80,262.40) scale(1.110,1.500)" /></g>
<g fill="none" stroke="#30242c" stroke-width="1.00" stroke-linejoin="round" opacity="0.72"><path d="M0.8,2 L2.4,0 L2.4,8" vector-effect="non-scaling-stroke" transform="translate(389.00,309.00) scale(1.110,1.500)" /><path d="M1,0 L3,0 L4,1 L4,7 L3,8 L1,8 L0,7 L0,1 Z M0.3,7 L3.7,1" vector-effect="non-scaling-stroke" transform="translate(395.10,309.00) scale(1.110,1.500)" /><path d="M0,1 L1,0 L3,0 L4,1 L4,3 L0,8 L4,8" vector-effect="non-scaling-stroke" transform="translate(401.20,309.00) scale(1.110,1.500)" /><path d="M4,1 L3,0 L1,0 L0,1 L0,7 L1,8 L3,8 L4,7 L4,5 L3,4 L0,4" vector-effect="non-scaling-stroke" transform="translate(407.30,309.00) scale(1.110,1.500)" /></g>
<g fill="none" stroke="#30242c" stroke-width="1.00" stroke-linejoin="round" opacity="0.72"><path d="M0,0 L4,0 L1.5,8" vector-effect="non-scaling-stroke" transform="translate(416.50,309.00) scale(1.110,1.500)" /><path d="M1,0 L3,0 L4,1 L4,7 L3,8 L1,8 L0,7 L0,1 Z M0.3,7 L3.7,1" vector-effect="non-scaling-stroke" transform="translate(422.60,309.00) scale(1.110,1.500)" /><path d="M4,0 L0,0 L0,3.5 L3,3.5 L4,4.5 L4,7 L3,8 L1,8 L0,7" vector-effect="non-scaling-stroke" transform="translate(428.70,309.00) scale(1.110,1.500)" /></g>
<g fill="none" stroke="#30242c" stroke-width="1.00" stroke-linejoin="round" opacity="0.72"><path d="M4,0 L0,0 L0,3.5 L3,3.5 L4,4.5 L4,7 L3,8 L1,8 L0,7" vector-effect="non-scaling-stroke" transform="translate(457.50,309.00) scale(1.110,1.500)" /><path d="M0,0 L4,0 L1.5,8" vector-effect="non-scaling-stroke" transform="translate(463.60,309.00) scale(1.110,1.500)" /><path d="M0,7 L1,8 L3,8 L4,7 L4,1 L3,0 L1,0 L0,1 L0,3 L1,4 L4,4" vector-effect="non-scaling-stroke" transform="translate(469.70,309.00) scale(1.110,1.500)" /></g>
<g fill="none" stroke="#30242c" stroke-width="1.00" stroke-linejoin="round" opacity="0.72"><path d="M0.8,2 L2.4,0 L2.4,8" vector-effect="non-scaling-stroke" transform="translate(511.50,309.00) scale(1.110,1.500)" /><path d="M1,0 L3,0 L4,1 L4,7 L3,8 L1,8 L0,7 L0,1 Z M0.3,7 L3.7,1" vector-effect="non-scaling-stroke" transform="translate(517.60,309.00) scale(1.110,1.500)" /><path d="M0,1 L1,0 L3,0 L4,1 L4,3 L0,8 L4,8" vector-effect="non-scaling-stroke" transform="translate(523.70,309.00) scale(1.110,1.500)" /><path d="M3,8 L3,0 L0,5.8 L4,5.8" vector-effect="non-scaling-stroke" transform="translate(529.80,309.00) scale(1.110,1.500)" /></g>
<g fill="none" stroke="#30242c" stroke-width="1.00" stroke-linejoin="round" opacity="0.72"><path d="M0.8,2 L2.4,0 L2.4,8" vector-effect="non-scaling-stroke" transform="translate(392.00,343.00) scale(1.110,1.500)" /><path d="M1,0 L3,0 L4,1 L4,7 L3,8 L1,8 L0,7 L0,1 Z M0.3,7 L3.7,1" vector-effect="non-scaling-stroke" transform="translate(398.10,343.00) scale(1.110,1.500)" /><path d="M0,1 L1,0 L3,0 L4,1 L4,3 L3,4 L1.5,4 M3,4 L4,5 L4,7 L3,8 L1,8 L0,7" vector-effect="non-scaling-stroke" transform="translate(404.20,343.00) scale(1.110,1.500)" /><path d="M0,1 L1,0 L3,0 L4,1 L4,3 L0,8 L4,8" vector-effect="non-scaling-stroke" transform="translate(410.30,343.00) scale(1.110,1.500)" /></g>
<g fill="none" stroke="#30242c" stroke-width="1.00" stroke-linejoin="round" opacity="0.72"><path d="M0.8,2 L2.4,0 L2.4,8" vector-effect="non-scaling-stroke" transform="translate(507.50,343.00) scale(1.110,1.500)" /><path d="M1,0 L3,0 L4,1 L4,7 L3,8 L1,8 L0,7 L0,1 Z M0.3,7 L3.7,1" vector-effect="non-scaling-stroke" transform="translate(513.60,343.00) scale(1.110,1.500)" /></g>
<g fill="none" stroke="#30242c" stroke-width="1.00" stroke-linejoin="round" opacity="0.72"><path d="M1,0 L3,0 L4,1 L4,3 L3,4 L1,4 L0,3 L0,1 Z M1,4 L0,5 L0,7 L1,8 L3,8 L4,7 L4,5 L3,4" vector-effect="non-scaling-stroke" transform="translate(415.00,353.00) scale(1.110,1.500)" /><path d="M0,0 L4,0 L1.5,8" vector-effect="non-scaling-stroke" transform="translate(421.10,353.00) scale(1.110,1.500)" /><path d="M0,1 L1,0 L3,0 L4,1 L4,3 L0,8 L4,8" vector-effect="non-scaling-stroke" transform="translate(427.20,353.00) scale(1.110,1.500)" /></g>
<g fill="none" stroke="#30242c" stroke-width="1.00" stroke-linejoin="round" opacity="0.72"><path d="M0.8,2 L2.4,0 L2.4,8" vector-effect="non-scaling-stroke" transform="translate(458.00,353.00) scale(1.110,1.500)" /><path d="M1,0 L3,0 L4,1 L4,7 L3,8 L1,8 L0,7 L0,1 Z M0.3,7 L3.7,1" vector-effect="non-scaling-stroke" transform="translate(464.10,353.00) scale(1.110,1.500)" /><path d="M0,1 L1,0 L3,0 L4,1 L4,3 L3,4 L1.5,4 M3,4 L4,5 L4,7 L3,8 L1,8 L0,7" vector-effect="non-scaling-stroke" transform="translate(470.20,353.00) scale(1.110,1.500)" /><path d="M1,0 L3,0 L4,1 L4,7 L3,8 L1,8 L0,7 L0,1 Z M0.3,7 L3.7,1" vector-effect="non-scaling-stroke" transform="translate(476.30,353.00) scale(1.110,1.500)" /></g>
</g>
<circle cx="456" cy="231" r="134" fill="none" stroke="#cc1418" stroke-width="4.4"/>
</svg>
<div class="a" style="left:596.00px;top:44.00px;width:244.00px;height:572.00px;background:#f0f0f0;"></div>
<div class="a" style="left:597.60px;top:45.00px;width:241.00px;height:4.00px;background:#f7f7f7;"></div>
<div class="a" style="left:596.30px;top:44.00px;width:1.20px;height:572.00px;background:#c6c6c6;"></div>
<div class="a" style="left:596.00px;top:44.30px;width:244.00px;height:1.00px;background:#c8c8c8;"></div>
<div class="a" style="left:596.00px;top:613.60px;width:244.00px;height:1.20px;background:#c4c4c4;"></div>
<div class="a" style="left:838.60px;top:44.00px;width:1.40px;height:572.00px;background:#d8d8d8;"></div>
<div class="a" style="left:599.00px;top:47.00px;width:91.60px;height:87.40px;background:#e6f8e6;"></div>
<div class="a" style="left:599.00px;top:51.00px;width:91.60px;height:83.40px;background:transparent;border:1px solid #c8ccc8;box-sizing:border-box;box-shadow:inset 1px 1px 0 rgba(255,255,255,0.8);"></div>
<div class="a" style="left:602.50px;top:48.00px;width:77.00px;height:6.00px;background:#e6f8e6;"></div>
<div class="t" style="left:604.00px;top:47.76px;font-size:6.90px;color:#000;font-weight:bold;transform:scaleX(1.0267);transform-origin:0 0;">GESTIONE FINESTRA</div>
<div class="a" style="left:602.00px;top:58.40px;width:84.60px;height:12.00px;background:#fff;box-shadow:inset 1px 1px 0 #777, inset -1px -1px 0 #f4f4f4;"></div>
<div class="t" style="left:604.30px;top:60.93px;font-size:8.00px;color:#000;transform:scaleX(0.8629);transform-origin:0 0;">Predefinita</div>
<div class="t" style="left:602.00px;top:78.23px;font-size:8.00px;color:#000;transform:scaleX(0.8397);transform-origin:0 0;">Contorno:</div>
<div class="a" style="left:640.30px;top:73.90px;width:46.30px;height:12.10px;background:#fff;box-shadow:inset 1px 1px 0 #777, inset -1px -1px 0 #f4f4f4;"></div>
<div class="a" style="left:642.40px;top:76.30px;width:31.50px;height:8.20px;background:#3399ff;"></div>
<div class="t" style="left:644.00px;top:77.25px;font-size:7.50px;color:#fff;">2</div>
<div class="a" style="left:676.20px;top:75.20px;width:9.20px;height:9.60px;background:#f0f0f0;box-shadow:inset 1px 1px 0 #fff, inset -1px -1px 0 #888;"></div>
<svg class="a" style="left:678.2px;top:78.6px" width="6" height="4" viewBox="0 0 6 4"><path d="M0.3,0.3 H5.3 L2.8,3.3 Z" fill="#000"/></svg>
<svg class="a" style="left:602.80px;top:91.60px" width="9" height="9" viewBox="0 0 9 9"><circle cx="4.5" cy="4.5" r="3.2" fill="#fff"/><path d="M1.9,6.6 A3.3,3.3 0 0 1 6.6,1.9" fill="none" stroke="#707070" stroke-width="1"/><path d="M6.9,2.3 A3.3,3.3 0 0 1 2.3,6.9" fill="none" stroke="#e0e0e0" stroke-width="0.9"/></svg>
<div class="t" style="left:614.80px;top:93.31px;font-size:5.90px;color:#222;font-weight:bold;transform:scaleX(0.8417);transform-origin:0 0;">SEZIONE</div>
<svg class="a" style="left:602.80px;top:101.50px" width="9" height="9" viewBox="0 0 9 9"><circle cx="4.5" cy="4.5" r="3.2" fill="#fff"/><path d="M1.9,6.6 A3.3,3.3 0 0 1 6.6,1.9" fill="none" stroke="#707070" stroke-width="1"/><path d="M6.9,2.3 A3.3,3.3 0 0 1 2.3,6.9" fill="none" stroke="#e0e0e0" stroke-width="0.9"/></svg>
<div class="t" style="left:614.80px;top:103.21px;font-size:5.90px;color:#222;font-weight:bold;transform:scaleX(0.9059);transform-origin:0 0;">MATERIALI</div>
<svg class="a" style="left:602.80px;top:111.90px" width="9" height="9" viewBox="0 0 9 9"><circle cx="4.5" cy="4.5" r="3.2" fill="#fff"/><path d="M1.9,6.6 A3.3,3.3 0 0 1 6.6,1.9" fill="none" stroke="#707070" stroke-width="1"/><path d="M6.9,2.3 A3.3,3.3 0 0 1 2.3,6.9" fill="none" stroke="#e0e0e0" stroke-width="0.9"/><circle cx="4.5" cy="4.5" r="1.3" fill="#000"/></svg>
<div class="t" style="left:614.80px;top:113.61px;font-size:5.90px;color:#222;font-weight:bold;transform:scaleX(0.9028);transform-origin:0 0;">RISULTATI TERMICI</div>
<svg class="a" style="left:602.80px;top:121.50px" width="9" height="9" viewBox="0 0 9 9"><circle cx="4.5" cy="4.5" r="3.2" fill="#fff"/><path d="M1.9,6.6 A3.3,3.3 0 0 1 6.6,1.9" fill="none" stroke="#707070" stroke-width="1"/><path d="M6.9,2.3 A3.3,3.3 0 0 1 2.3,6.9" fill="none" stroke="#e0e0e0" stroke-width="0.9"/></svg>
<div class="t" style="left:614.80px;top:123.21px;font-size:5.90px;color:#222;font-weight:bold;transform:scaleX(0.9138);transform-origin:0 0;">RISULTATI MECCANICI</div>
<div class="a" style="left:693.90px;top:47.00px;width:144.30px;height:87.20px;background:#ffffc8;"></div>
<div class="a" style="left:693.90px;top:51.00px;width:144.30px;height:83.20px;background:transparent;border:1px solid #c8ccc8;box-sizing:border-box;box-shadow:inset 1px 1px 0 rgba(255,255,255,0.8);"></div>
<div class="a" style="left:698.90px;top:48.00px;width:43.50px;height:6.00px;background:#ffffc8;"></div>
<div class="t" style="left:700.40px;top:47.76px;font-size:6.90px;color:#000;font-weight:bold;">VISUALIZZA</div>
<div class="a" style="left:700.60px;top:58.60px;width:7.40px;height:7.40px;background:#fff;box-shadow:inset 1px 1px 0 #808080, inset -1px -1px 0 #f0f0f0;"></div>
<svg class="a" style="left:700.30px;top:58.30px" width="8" height="8" viewBox="0 0 8 8"><path d="M1.6,3.6 L3.3,5.4 L6.6,1.9" fill="none" stroke="#000" stroke-width="1.5"/></svg>
<div class="t" style="left:711.80px;top:59.51px;font-size:5.90px;color:#111;font-weight:bold;transform:scaleX(0.8400);transform-origin:0 0;">ESPOSIZIONE</div>
<div class="a" style="left:700.60px;top:69.30px;width:7.40px;height:7.40px;background:#fff;box-shadow:inset 1px 1px 0 #808080, inset -1px -1px 0 #f0f0f0;"></div>
<svg class="a" style="left:700.30px;top:69.00px" width="8" height="8" viewBox="0 0 8 8"><path d="M1.6,3.6 L3.3,5.4 L6.6,1.9" fill="none" stroke="#000" stroke-width="1.5"/></svg>
<div class="t" style="left:711.80px;top:70.21px;font-size:5.90px;color:#111;font-weight:bold;transform:scaleX(0.9295);transform-origin:0 0;">MAPPA TERMICA</div>
<div class="a" style="left:700.60px;top:80.05px;width:7.40px;height:7.40px;background:#fff;box-shadow:inset 1px 1px 0 #808080, inset -1px -1px 0 #f0f0f0;"></div>
<div class="t" style="left:711.80px;top:80.96px;font-size:5.90px;color:#111;font-weight:bold;transform:scaleX(0.9069);transform-origin:0 0;">TEMP. FERRI</div>
<div class="a" style="left:700.60px;top:89.90px;width:7.40px;height:7.40px;background:#fff;box-shadow:inset 1px 1px 0 #808080, inset -1px -1px 0 #f0f0f0;"></div>
<div class="t" style="left:711.80px;top:90.81px;font-size:5.90px;color:#111;font-weight:bold;transform:scaleX(0.9035);transform-origin:0 0;">TEMP .NODI</div>
<div class="a" style="left:700.60px;top:99.70px;width:7.40px;height:7.40px;background:#fff;box-shadow:inset 1px 1px 0 #808080, inset -1px -1px 0 #f0f0f0;"></div>
<div class="t" style="left:711.80px;top:100.61px;font-size:5.90px;color:#111;font-weight:bold;transform:scaleX(0.8928);transform-origin:0 0;">TEMP. INTERNE</div>
<div class="a" style="left:700.60px;top:109.20px;width:7.40px;height:7.40px;background:#e4e4e4;box-shadow:inset 1px 1px 0 #808080, inset -1px -1px 0 #f0f0f0;"></div>
<div class="t" style="left:711.80px;top:110.11px;font-size:5.90px;color:#b8b8a0;font-weight:bold;transform:scaleX(0.8662);transform-origin:0 0;">INFO TEMPO</div>
<div class="a" style="left:700.60px;top:118.80px;width:7.40px;height:7.40px;background:#fff;box-shadow:inset 1px 1px 0 #808080, inset -1px -1px 0 #f0f0f0;"></div>
<svg class="a" style="left:700.30px;top:118.50px" width="8" height="8" viewBox="0 0 8 8"><path d="M1.6,3.6 L3.3,5.4 L6.6,1.9" fill="none" stroke="#000" stroke-width="1.5"/></svg>
<div class="t" style="left:711.80px;top:119.71px;font-size:5.90px;color:#111;font-weight:bold;transform:scaleX(0.8800);transform-origin:0 0;">MESH</div>
<div class="a" style="left:767.10px;top:58.60px;width:7.40px;height:7.40px;background:#fff;box-shadow:inset 1px 1px 0 #808080, inset -1px -1px 0 #f0f0f0;"></div>
<div class="t" style="left:778.00px;top:59.51px;font-size:5.90px;color:#111;font-weight:bold;transform:scaleX(0.8827);transform-origin:0 0;">ISOTERME</div>
<div class="a" style="left:767.10px;top:69.30px;width:7.40px;height:7.40px;background:#fff;box-shadow:inset 1px 1px 0 #808080, inset -1px -1px 0 #f0f0f0;"></div>
<div class="t" style="left:778.00px;top:70.21px;font-size:5.90px;color:#111;font-weight:bold;transform:scaleX(0.9122);transform-origin:0 0;">NOMI NODI</div>
<div class="a" style="left:767.10px;top:80.05px;width:7.40px;height:7.40px;background:#fff;box-shadow:inset 1px 1px 0 #808080, inset -1px -1px 0 #f0f0f0;"></div>
<div class="t" style="left:778.00px;top:80.96px;font-size:5.90px;color:#111;font-weight:bold;transform:scaleX(0.8961);transform-origin:0 0;">NOMI ELEMENTI</div>
<div class="a" style="left:767.10px;top:89.90px;width:7.40px;height:7.40px;background:#fff;box-shadow:inset 1px 1px 0 #808080, inset -1px -1px 0 #f0f0f0;"></div>
<svg class="a" style="left:766.80px;top:89.60px" width="8" height="8" viewBox="0 0 8 8"><path d="M1.6,3.6 L3.3,5.4 L6.6,1.9" fill="none" stroke="#000" stroke-width="1.5"/></svg>
<div class="t" style="left:778.00px;top:90.81px;font-size:5.90px;color:#111;font-weight:bold;transform:scaleX(0.9352);transform-origin:0 0;">MINICAD</div>
<div class="a" style="left:767.10px;top:99.70px;width:7.40px;height:7.40px;background:#e4e4e4;box-shadow:inset 1px 1px 0 #808080, inset -1px -1px 0 #f0f0f0;"></div>
<svg class="a" style="left:766.80px;top:99.40px" width="8" height="8" viewBox="0 0 8 8"><path d="M1.6,3.6 L3.3,5.4 L6.6,1.9" fill="none" stroke="#909090" stroke-width="1.5"/></svg>
<div class="t" style="left:778.00px;top:100.61px;font-size:5.90px;color:#b8b8a0;font-weight:bold;transform:scaleX(0.8455);transform-origin:0 0;">INFO SEZIONE</div>
<div class="a" style="left:767.10px;top:109.20px;width:7.40px;height:7.40px;background:#e4e4e4;box-shadow:inset 1px 1px 0 #808080, inset -1px -1px 0 #f0f0f0;"></div>
<div class="t" style="left:778.00px;top:110.11px;font-size:5.90px;color:#b8b8a0;font-weight:bold;transform:scaleX(0.8535);transform-origin:0 0;">COPR. INT.</div>
<div class="a" style="left:767.10px;top:118.80px;width:7.40px;height:7.40px;background:#e4e4e4;box-shadow:inset 1px 1px 0 #808080, inset -1px -1px 0 #f0f0f0;"></div>
<div class="t" style="left:778.00px;top:119.71px;font-size:5.90px;color:#b8b8a0;font-weight:bold;transform:scaleX(0.8444);transform-origin:0 0;">COPR.EST.</div>
<div class="a" style="left:811.00px;top:110.50px;width:15.60px;height:12.00px;background:#fff;box-shadow:inset 1px 1px 0 #777, inset -1px -1px 0 #f4f4f4;"></div>
<div class="t" style="left:813.20px;top:112.83px;font-size:8.00px;color:#304060;">3</div>
<div class="a" style="left:599.00px;top:136.50px;width:239.20px;height:47.00px;background:#ccffff;"></div>
<div class="a" style="left:599.00px;top:140.50px;width:239.20px;height:43.00px;background:transparent;border:1px solid #c8ccc8;box-sizing:border-box;box-shadow:inset 1px 1px 0 rgba(255,255,255,0.8);"></div>
<div class="a" style="left:602.80px;top:137.50px;width:37.80px;height:6.00px;background:#ccffff;"></div>
<div class="t" style="left:604.30px;top:137.26px;font-size:6.90px;color:#000;font-weight:bold;transform:scaleX(1.0239);transform-origin:0 0;">PANNELLI</div>
<div class="a" style="left:605.50px;top:147.50px;width:7.40px;height:7.40px;background:#fff;box-shadow:inset 1px 1px 0 #808080, inset -1px -1px 0 #f0f0f0;"></div>
<svg class="a" style="left:605.20px;top:147.20px" width="8" height="8" viewBox="0 0 8 8"><path d="M1.6,3.6 L3.3,5.4 L6.6,1.9" fill="none" stroke="#000" stroke-width="1.5"/></svg>
<div class="t" style="left:616.80px;top:148.47px;font-size:5.70px;color:#222;font-weight:bold;transform:scaleX(0.8773);transform-origin:0 0;">CALCOLO T.</div>
<div class="a" style="left:605.50px;top:159.60px;width:7.40px;height:7.40px;background:#fff;box-shadow:inset 1px 1px 0 #808080, inset -1px -1px 0 #f0f0f0;"></div>
<div class="t" style="left:616.80px;top:160.57px;font-size:5.70px;color:#222;font-weight:bold;transform:scaleX(0.8502);transform-origin:0 0;">SOLLEC.</div>
<div class="a" style="left:605.50px;top:171.20px;width:7.40px;height:7.40px;background:#fff;box-shadow:inset 1px 1px 0 #808080, inset -1px -1px 0 #f0f0f0;"></div>
<div class="t" style="left:616.80px;top:172.17px;font-size:5.70px;color:#222;font-weight:bold;transform:scaleX(0.8751);transform-origin:0 0;">INFO RIS.</div>
<div class="a" style="left:656.00px;top:147.50px;width:7.40px;height:7.40px;background:#fff;box-shadow:inset 1px 1px 0 #808080, inset -1px -1px 0 #f0f0f0;"></div>
<svg class="a" style="left:655.70px;top:147.20px" width="8" height="8" viewBox="0 0 8 8"><path d="M1.6,3.6 L3.3,5.4 L6.6,1.9" fill="none" stroke="#000" stroke-width="1.5"/></svg>
<div class="t" style="left:667.40px;top:148.47px;font-size:5.70px;color:#222;font-weight:bold;transform:scaleX(0.8678);transform-origin:0 0;">TIPI DI ESP.</div>
<div class="a" style="left:656.00px;top:159.60px;width:7.40px;height:7.40px;background:#fff;box-shadow:inset 1px 1px 0 #808080, inset -1px -1px 0 #f0f0f0;"></div>
<div class="t" style="left:667.40px;top:160.57px;font-size:5.70px;color:#222;font-weight:bold;transform:scaleX(0.8987);transform-origin:0 0;">OPZ RIS MEC</div>
<div class="a" style="left:656.00px;top:171.20px;width:7.40px;height:7.40px;background:#fff;box-shadow:inset 1px 1px 0 #808080, inset -1px -1px 0 #f0f0f0;"></div>
<div class="t" style="left:667.40px;top:172.17px;font-size:5.70px;color:#222;font-weight:bold;transform:scaleX(0.8981);transform-origin:0 0;">SERVIZIO</div>
<div class="a" style="left:704.00px;top:147.50px;width:7.40px;height:7.40px;background:#fff;box-shadow:inset 1px 1px 0 #808080, inset -1px -1px 0 #f0f0f0;"></div>
<svg class="a" style="left:703.70px;top:147.20px" width="8" height="8" viewBox="0 0 8 8"><path d="M1.6,3.6 L3.3,5.4 L6.6,1.9" fill="none" stroke="#000" stroke-width="1.5"/></svg>
<div class="t" style="left:715.00px;top:148.47px;font-size:5.70px;color:#222;font-weight:bold;transform:scaleX(0.9907);transform-origin:0 0;">MT-TEMPO</div>
<div class="t" style="left:757.30px;top:148.40px;font-size:7.80px;color:#000;transform:scaleX(0.8670);transform-origin:0 0;">Nro el.finiti :</div>
<div class="a" style="left:807.90px;top:145.70px;width:15.70px;height:11.30px;background:#fff;box-shadow:inset 1px 1px 0 #777, inset -1px -1px 0 #f4f4f4;"></div>
<div class="t" style="left:809.80px;top:148.06px;font-size:8.20px;color:#000;transform:scaleX(0.8918);transform-origin:0 0;">271</div>
<div class="t" style="left:757.30px;top:162.40px;font-size:7.80px;color:#000;transform:scaleX(0.8608);transform-origin:0 0;">Nro tempi</div>
<div class="t" style="left:757.30px;top:171.20px;font-size:7.80px;color:#000;transform:scaleX(0.8216);transform-origin:0 0;">memorizzati :</div>
<div class="a" style="left:808.00px;top:164.40px;width:15.60px;height:11.00px;background:#e8e8e8;box-shadow:inset 1px 1px 0 #777, inset -1px -1px 0 #f4f4f4;"></div>
<div class="t" style="left:810.00px;top:166.66px;font-size:8.20px;color:#000;">5</div>
<div class="a" style="left:597.60px;top:189.80px;width:239.80px;height:60.80px;background:linear-gradient(#fbb476,#ffb878 30%,#ffb878);"></div>
<div class="a" style="left:597.60px;top:189.00px;width:239.80px;height:1.00px;background:#ece0d4;"></div>
<div class="a" style="left:676.00px;top:195.00px;width:150.00px;height:1.00px;background:#e0a878;"></div>
<div class="t" style="left:604.30px;top:191.96px;font-size:6.90px;color:#000;font-weight:bold;transform:scaleX(1.0259);transform-origin:0 0;">CALCOLO TERMICO</div>
<div class="a" style="left:828.00px;top:196.20px;width:9.60px;height:5.40px;background:#f0f0f0;box-shadow:inset 1px 1px 0 #fff, inset -1px -1px 0 #888;"></div>
<svg class="a" style="left:830.30px;top:197.50px" width="5" height="3" viewBox="0 0 5 3"><path d="M0,3 H5 L2.5,0 Z" fill="#000"/></svg>
<div class="a" style="left:604.50px;top:202.40px;width:49.00px;height:14.60px;background:#f0f0f0;box-shadow:inset 1px 1px 0 #fff, inset -1px -1px 0 #888;"></div>
<div class="t" style="left:607.49px;top:206.25px;font-size:7.10px;color:#000;">Genera mesh</div>
<div class="a" style="left:604.50px;top:218.00px;width:49.00px;height:15.00px;background:#f0f0f0;box-shadow:inset 1px 1px 0 #fff, inset -1px -1px 0 #888;"></div>
<div class="t" style="left:618.23px;top:221.80px;font-size:7.60px;color:#000;">Brucia</div>
<div class="t" style="left:658.50px;top:205.57px;font-size:7.60px;color:#000;transform:scaleX(0.8839);transform-origin:0 0;">Mappe ogni (min) :</div>
<div class="a" style="left:717.40px;top:203.20px;width:20.80px;height:11.80px;background:#fff;box-shadow:inset 1px 1px 0 #777, inset -1px -1px 0 #f4f4f4;"></div>
<div class="t" style="left:719.60px;top:205.57px;font-size:7.60px;color:#000;">30</div>
<div class="t" style="left:658.50px;top:221.17px;font-size:7.60px;color:#000;transform:scaleX(0.9011);transform-origin:0 0;">Numero mappe :</div>
<div class="a" style="left:717.40px;top:218.70px;width:20.80px;height:11.90px;background:#fff;box-shadow:inset 1px 1px 0 #777, inset -1px -1px 0 #f4f4f4;"></div>
<div class="t" style="left:719.60px;top:221.17px;font-size:7.60px;color:#000;">4</div>
<div class="t" style="left:748.20px;top:205.57px;font-size:7.60px;color:#000;transform:scaleX(0.8671);transform-origin:0 0;">Dt calc.:</div>
<div class="t" style="left:748.20px;top:221.17px;font-size:7.60px;color:#000;transform:scaleX(0.8288);transform-origin:0 0;">Dt trian.:</div>
<div class="a" style="left:775.00px;top:203.80px;width:7.90px;height:10.40px;background:#f0f0f0;box-shadow:inset 1px 1px 0 #fff, inset -1px -1px 0 #888;"></div>
<div class="t" style="left:777.78px;top:205.59px;font-size:7.00px;color:#000;">-</div>
<div class="a" style="left:783.40px;top:203.40px;width:18.80px;height:11.20px;background:#fff;box-shadow:inset 1px 1px 0 #777, inset -1px -1px 0 #f4f4f4;"></div>
<div class="a" style="left:802.80px;top:203.80px;width:7.60px;height:10.40px;background:#f0f0f0;box-shadow:inset 1px 1px 0 #fff, inset -1px -1px 0 #888;"></div>
<div class="t" style="left:804.85px;top:206.08px;font-size:6.00px;color:#000;">+</div>
<div class="a" style="left:775.00px;top:219.60px;width:7.90px;height:10.40px;background:#f0f0f0;box-shadow:inset 1px 1px 0 #fff, inset -1px -1px 0 #888;"></div>
<div class="t" style="left:777.78px;top:221.39px;font-size:7.00px;color:#000;">-</div>
<div class="a" style="left:783.40px;top:219.20px;width:18.80px;height:11.20px;background:#fff;box-shadow:inset 1px 1px 0 #777, inset -1px -1px 0 #f4f4f4;"></div>
<div class="a" style="left:802.80px;top:219.60px;width:7.60px;height:10.40px;background:#f0f0f0;box-shadow:inset 1px 1px 0 #fff, inset -1px -1px 0 #888;"></div>
<div class="t" style="left:804.85px;top:221.88px;font-size:6.00px;color:#000;">+</div>
<div class="t" style="left:786.00px;top:205.57px;font-size:7.60px;color:#000;">10</div>
<div class="t" style="left:786.00px;top:221.17px;font-size:7.60px;color:#000;">100</div>
<div class="a" style="left:813.20px;top:211.20px;width:9.50px;height:10.50px;background:#f0f0f0;box-shadow:inset 1px 1px 0 #fff, inset -1px -1px 0 #888;"></div>
<div class="t" style="left:815.80px;top:213.07px;font-size:7.00px;color:#000;">&lt;</div>
<div class="a" style="left:606.40px;top:237.90px;width:7.40px;height:7.40px;background:#fff;box-shadow:inset 1px 1px 0 #808080, inset -1px -1px 0 #f0f0f0;"></div>
<div class="t" style="left:617.40px;top:238.94px;font-size:5.50px;color:#222;font-weight:bold;transform:scaleX(0.9543);transform-origin:0 0;">CHECK DATABASE</div>
<div class="a" style="left:792.40px;top:237.00px;width:14.90px;height:10.00px;background:#f0f0f0;box-shadow:inset 1px 1px 0 #fff, inset -1px -1px 0 #888;"></div>
<div class="t" style="left:797.32px;top:238.59px;font-size:7.00px;color:#000;">R</div>
<div class="a" style="left:597.60px;top:252.60px;width:239.80px;height:93.60px;background:#ffffc0;"></div>
<div class="a" style="left:597.60px;top:253.00px;width:240.80px;height:1.00px;background:#f0f0d8;"></div>
<div class="a" style="left:680.00px;top:257.60px;width:146.00px;height:1.00px;background:#d8d8a8;"></div>
<div class="t" style="left:604.30px;top:254.86px;font-size:6.90px;color:#000;font-weight:bold;transform:scaleX(1.0347);transform-origin:0 0;">TIPI DI ESPOSIZIONE</div>
<div class="a" style="left:828.00px;top:259.70px;width:9.60px;height:5.40px;background:#f0f0f0;box-shadow:inset 1px 1px 0 #fff, inset -1px -1px 0 #888;"></div>
<svg class="a" style="left:830.30px;top:261.00px" width="5" height="3" viewBox="0 0 5 3"><path d="M0,3 H5 L2.5,0 Z" fill="#000"/></svg>
<div class="t" style="left:657.90px;top:263.87px;font-size:7.60px;color:#000;transform:scaleX(0.9077);transform-origin:0 0;">Nome</div>
<div class="t" style="left:711.40px;top:263.87px;font-size:7.60px;color:#000;transform:scaleX(0.9120);transform-origin:0 0;">Col</div>
<svg class="a" style="left:604.50px;top:276.90px" width="9" height="9" viewBox="0 0 9 9"><circle cx="4.5" cy="4.5" r="3.2" fill="#fff"/><path d="M1.9,6.6 A3.3,3.3 0 0 1 6.6,1.9" fill="none" stroke="#707070" stroke-width="1"/><path d="M6.9,2.3 A3.3,3.3 0 0 1 2.3,6.9" fill="none" stroke="#e0e0e0" stroke-width="0.9"/><circle cx="4.5" cy="4.5" r="1.3" fill="#000"/></svg>
<div class="t" style="left:620.70px;top:277.67px;font-size:7.60px;color:#000;">1</div>
<div class="a" style="left:630.80px;top:275.20px;width:72.90px;height:11.90px;background:#f0f0f0;box-shadow:inset 1px 1px 0 #777, inset -1px -1px 0 #f4f4f4;"></div>
<div class="t" style="left:633.20px;top:277.57px;font-size:7.60px;color:#000;transform:scaleX(0.9327);transform-origin:0 0;">Fuoco</div>
<div class="a" style="left:709.60px;top:275.40px;width:15.20px;height:11.30px;background:#ff0000;"></div>
<svg class="a" style="left:604.50px;top:290.80px" width="9" height="9" viewBox="0 0 9 9"><circle cx="4.5" cy="4.5" r="3.2" fill="#fff"/><path d="M1.9,6.6 A3.3,3.3 0 0 1 6.6,1.9" fill="none" stroke="#707070" stroke-width="1"/><path d="M6.9,2.3 A3.3,3.3 0 0 1 2.3,6.9" fill="none" stroke="#e0e0e0" stroke-width="0.9"/></svg>
<div class="t" style="left:620.70px;top:291.57px;font-size:7.60px;color:#000;">2</div>
<div class="a" style="left:630.80px;top:289.10px;width:72.90px;height:11.90px;background:#f0f0f0;box-shadow:inset 1px 1px 0 #777, inset -1px -1px 0 #f4f4f4;"></div>
<div class="t" style="left:633.20px;top:291.47px;font-size:7.60px;color:#000;transform:scaleX(0.9160);transform-origin:0 0;">Fuoco esterno</div>
<div class="a" style="left:709.60px;top:289.30px;width:15.20px;height:11.30px;background:#ffff00;"></div>
<svg class="a" style="left:604.50px;top:304.70px" width="9" height="9" viewBox="0 0 9 9"><circle cx="4.5" cy="4.5" r="3.2" fill="#fff"/><path d="M1.9,6.6 A3.3,3.3 0 0 1 6.6,1.9" fill="none" stroke="#707070" stroke-width="1"/><path d="M6.9,2.3 A3.3,3.3 0 0 1 2.3,6.9" fill="none" stroke="#e0e0e0" stroke-width="0.9"/></svg>
<div class="t" style="left:620.70px;top:305.47px;font-size:7.60px;color:#000;">3</div>
<div class="a" style="left:630.80px;top:303.00px;width:72.90px;height:11.90px;background:#f0f0f0;box-shadow:inset 1px 1px 0 #777, inset -1px -1px 0 #f4f4f4;"></div>
<div class="t" style="left:633.20px;top:305.37px;font-size:7.60px;color:#000;transform:scaleX(0.9064);transform-origin:0 0;">Fuoco idrocarburi</div>
<div class="a" style="left:709.60px;top:303.20px;width:15.20px;height:11.30px;background:#00ff00;"></div>
<svg class="a" style="left:604.50px;top:318.50px" width="9" height="9" viewBox="0 0 9 9"><circle cx="4.5" cy="4.5" r="3.2" fill="#fff"/><path d="M1.9,6.6 A3.3,3.3 0 0 1 6.6,1.9" fill="none" stroke="#707070" stroke-width="1"/><path d="M6.9,2.3 A3.3,3.3 0 0 1 2.3,6.9" fill="none" stroke="#e0e0e0" stroke-width="0.9"/></svg>
<div class="t" style="left:620.70px;top:319.27px;font-size:7.60px;color:#000;">4</div>
<div class="a" style="left:630.80px;top:316.80px;width:72.90px;height:11.90px;background:#f0f0f0;box-shadow:inset 1px 1px 0 #777, inset -1px -1px 0 #f4f4f4;"></div>
<div class="t" style="left:633.20px;top:319.17px;font-size:7.60px;color:#000;transform:scaleX(0.8850);transform-origin:0 0;">Aria 20°</div>
<div class="a" style="left:709.60px;top:317.00px;width:15.20px;height:11.30px;background:#00ffff;"></div>
<svg class="a" style="left:604.50px;top:332.30px" width="9" height="9" viewBox="0 0 9 9"><circle cx="4.5" cy="4.5" r="3.2" fill="#fff"/><path d="M1.9,6.6 A3.3,3.3 0 0 1 6.6,1.9" fill="none" stroke="#707070" stroke-width="1"/><path d="M6.9,2.3 A3.3,3.3 0 0 1 2.3,6.9" fill="none" stroke="#e0e0e0" stroke-width="0.9"/></svg>
<div class="t" style="left:620.70px;top:333.07px;font-size:7.60px;color:#000;">5</div>
<div class="a" style="left:630.80px;top:330.60px;width:72.90px;height:11.90px;background:#f0f0f0;box-shadow:inset 1px 1px 0 #777, inset -1px -1px 0 #f4f4f4;"></div>
<div class="t" style="left:633.20px;top:332.97px;font-size:7.60px;color:#000;transform:scaleX(0.9134);transform-origin:0 0;">Vuoti interni</div>
<div class="a" style="left:709.60px;top:330.80px;width:15.20px;height:11.30px;background:#0000ff;"></div>
<div class="t" style="left:763.50px;top:277.87px;font-size:7.60px;color:#000;transform:scaleX(0.8914);transform-origin:0 0;">Numero tipi :</div>
<div class="t" style="left:813.20px;top:277.87px;font-size:7.60px;color:#000;">5</div>
<div class="a" style="left:763.60px;top:289.20px;width:31.60px;height:12.00px;background:#f0f0f0;box-shadow:inset 1px 1px 0 #fff, inset -1px -1px 0 #888;"></div>
<div class="t" style="left:769.12px;top:291.50px;font-size:7.60px;color:#000;">LISTA</div>
<div class="a" style="left:597.60px;top:347.00px;width:240.80px;height:1.00px;background:#fff;"></div>
<div class="a" style="left:597.60px;top:394.50px;width:240.80px;height:1.00px;background:#c8c8c8;"></div>
<div class="a" style="left:706.00px;top:352.40px;width:120.00px;height:1.00px;background:#d0d0d0;"></div>
<div class="t" style="left:604.30px;top:349.76px;font-size:6.90px;color:#000;font-weight:bold;transform:scaleX(1.0671);transform-origin:0 0;">MAPPE TERMICHE - TEMPO</div>
<div class="a" style="left:828.00px;top:354.40px;width:9.60px;height:5.40px;background:#f0f0f0;box-shadow:inset 1px 1px 0 #fff, inset -1px -1px 0 #888;"></div>
<svg class="a" style="left:830.30px;top:355.70px" width="5" height="3" viewBox="0 0 5 3"><path d="M0,3 H5 L2.5,0 Z" fill="#000"/></svg>
<div class="a" style="left:606.40px;top:358.30px;width:125.30px;height:22.30px;background:#f0f0f0;border:1px solid #808080;box-sizing:border-box;"></div>
<div class="a" style="left:612.30px;top:364.80px;width:106.30px;height:1.70px;background:#8c8c8c;"></div>
<div class="a" style="left:615.70px;top:375.20px;width:1.00px;height:1.60px;background:#444;"></div>
<div class="a" style="left:642.20px;top:375.20px;width:1.00px;height:1.60px;background:#444;"></div>
<div class="a" style="left:668.40px;top:375.20px;width:1.00px;height:1.60px;background:#444;"></div>
<div class="a" style="left:695.20px;top:375.20px;width:1.00px;height:1.60px;background:#444;"></div>
<div class="a" style="left:721.30px;top:375.20px;width:1.00px;height:1.60px;background:#444;"></div>
<svg class="a" style="left:721px;top:359.5px" width="8" height="19" viewBox="0 0 8 19"><path d="M2.2,0.5 H6.5 V13.5 L4,17.5 L2.2,14 Z" fill="#f0f0f0" stroke="#fff" stroke-width="0.6"/><path d="M6.5,0.5 V13.5 L4,17.8" fill="none" stroke="#555" stroke-width="1"/></svg>
<div class="t" style="left:613.00px;top:382.03px;font-size:8.00px;color:#141496;font-weight:bold;">0</div>
<div class="t" style="left:716.50px;top:382.03px;font-size:8.00px;color:#141496;font-weight:bold;transform:scaleX(0.9869);transform-origin:0 0;">120 min</div>
<div class="t" style="left:747.70px;top:360.17px;font-size:7.60px;color:#000;transform:scaleX(0.9227);transform-origin:0 0;">Tempo [sec.]:</div>
<div class="t" style="left:797.40px;top:360.17px;font-size:7.60px;color:#000;transform:scaleX(0.9701);transform-origin:0 0;">7200</div>
<div class="a" style="left:766.20px;top:375.20px;width:47.60px;height:12.80px;background:#f0f0f0;box-shadow:inset 1px 1px 0 #fff, inset -1px -1px 0 #888;"></div>
<div class="t" style="left:775.50px;top:377.97px;font-size:7.60px;color:#a8a8a8;transform:scaleX(0.8624);transform-origin:0 0;">Interrompi</div>
<div class="a" style="left:598.00px;top:396.00px;width:240.40px;height:217.50px;background:#efefef;"></div>
<div class="a" style="left:0.00px;top:616.00px;width:840.00px;height:10.00px;background:#f0f0f0;"></div>
<div class="a" style="left:0.00px;top:615.60px;width:840.00px;height:1.00px;background:#b8b8b8;"></div>
<div class="a" style="left:0.00px;top:616.60px;width:4.00px;height:9.40px;background:#f8f8f8;border-left:1px solid #c0c0c0;"></div>
<div class="t" style="left:779.00px;top:619.17px;font-size:7.60px;color:#111;transform:scaleX(0.9328);transform-origin:0 0;">Z= 90.4 Y= 127.86</div>
</body></html>
